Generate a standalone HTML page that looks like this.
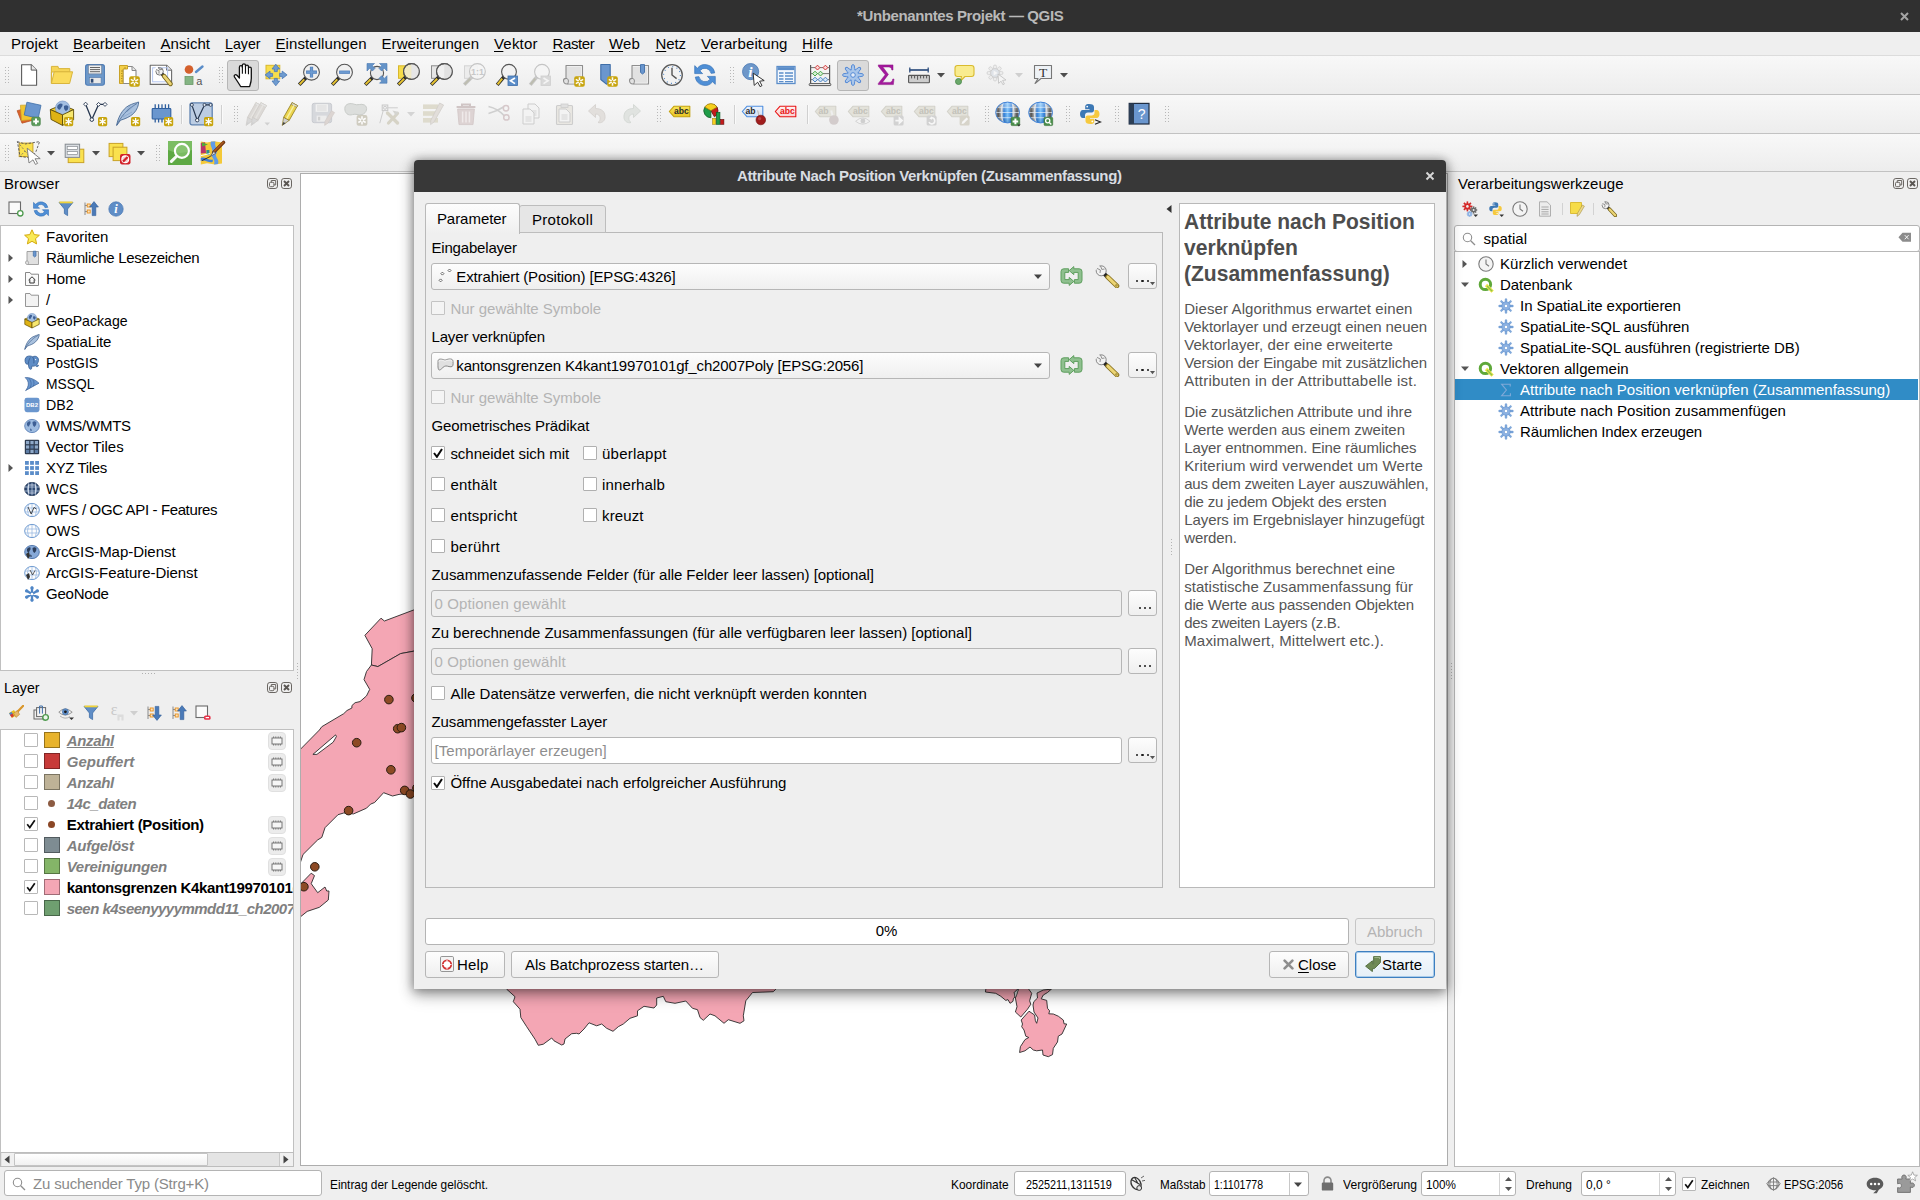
<!DOCTYPE html>
<html><head><meta charset="utf-8"><title>QGIS</title>
<style>
html,body{margin:0;padding:0;}
body{width:1920px;height:1200px;overflow:hidden;background:#efefef;font-family:"Liberation Sans", sans-serif;font-size:15px;position:relative;}
div,svg{box-sizing:border-box;}
.btn{position:absolute;border:1px solid #b6b6b6;border-radius:3px;background:linear-gradient(#fdfdfd,#efefef);}
.cb{position:absolute;width:14px;height:14px;border:1px solid #b8b8b8;border-radius:1px;background:#fff;}
.hd{position:absolute;width:5px;background-image:radial-gradient(circle,#b8b8b8 0.7px,transparent 0.9px);background-size:3px 3px;}
</style></head><body>
<div style="position:absolute;left:0px;top:0px;width:1920px;height:32px;background:#303030;"></div><div style="position:absolute;left:857px;top:5.80px;line-height:20px;height:20px;white-space:pre;font-size:15px;color:#b9b9b9;font-weight:700;letter-spacing:-0.386px;">*Unbenanntes Projekt — QGIS</div><svg style="position:absolute;left:1899.5px;top:11.5px;" width="9" height="9" viewBox="0 0 9 9"><path d="M1 1 L8 8 M8 1 L1 8" stroke="#a4a4a4" stroke-width="2" fill="none"/></svg><div style="position:absolute;left:0px;top:32px;width:1920px;height:24px;background:#efefef;border-bottom:1px solid #dcdcdc;"></div><div style="position:absolute;left:11px;top:33.80px;line-height:20px;white-space:pre;letter-spacing:0.048px;">Pro<span style="text-decoration:underline;text-underline-offset:2px">j</span>ekt</div><div style="position:absolute;left:73px;top:33.80px;line-height:20px;white-space:pre;letter-spacing:-0.007px;"><span style="text-decoration:underline;text-underline-offset:2px">B</span>earbeiten</div><div style="position:absolute;left:160.5px;top:33.80px;line-height:20px;white-space:pre;letter-spacing:0.046px;"><span style="text-decoration:underline;text-underline-offset:2px">A</span>nsicht</div><div style="position:absolute;left:225px;top:33.80px;line-height:20px;white-space:pre;transform-origin:0 0;transform:scaleX(0.9459);"><span style="text-decoration:underline;text-underline-offset:2px">L</span>ayer</div><div style="position:absolute;left:275.5px;top:33.80px;line-height:20px;white-space:pre;letter-spacing:0.074px;"><span style="text-decoration:underline;text-underline-offset:2px">E</span>instellungen</div><div style="position:absolute;left:381.5px;top:33.80px;line-height:20px;white-space:pre;letter-spacing:0.061px;">Er<span style="text-decoration:underline;text-underline-offset:2px">w</span>eiterungen</div><div style="position:absolute;left:494px;top:33.80px;line-height:20px;white-space:pre;letter-spacing:0.176px;"><span style="text-decoration:underline;text-underline-offset:2px">V</span>ektor</div><div style="position:absolute;left:552.5px;top:33.80px;line-height:20px;white-space:pre;letter-spacing:-0.398px;"><span style="text-decoration:underline;text-underline-offset:2px">R</span>aster</div><div style="position:absolute;left:609px;top:33.80px;line-height:20px;white-space:pre;letter-spacing:0.169px;"><span style="text-decoration:underline;text-underline-offset:2px">W</span>eb</div><div style="position:absolute;left:655.5px;top:33.80px;line-height:20px;white-space:pre;letter-spacing:-0.098px;"><span style="text-decoration:underline;text-underline-offset:2px">N</span>etz</div><div style="position:absolute;left:701px;top:33.80px;line-height:20px;white-space:pre;letter-spacing:0.124px;"><span style="text-decoration:underline;text-underline-offset:2px">V</span>erarbeitung</div><div style="position:absolute;left:802px;top:33.80px;line-height:20px;white-space:pre;letter-spacing:0.219px;"><span style="text-decoration:underline;text-underline-offset:2px">H</span>ilfe</div><div style="position:absolute;left:0px;top:56px;width:1920px;height:39px;background:linear-gradient(#f8f8f8,#ededed);border-bottom:1px solid #c2c2c2;"></div><div style="position:absolute;left:0px;top:95px;width:1920px;height:39px;background:linear-gradient(#f8f8f8,#ededed);border-bottom:1px solid #c2c2c2;"></div><div style="position:absolute;left:0px;top:134px;width:1920px;height:38px;background:linear-gradient(#f8f8f8,#ededed);border-bottom:1px solid #c2c2c2;"></div><div class="hd" style="left:4px;top:66px;height:17px"></div><svg style="position:absolute;left:16.0px;top:63.0px;overflow:visible;" width="24" height="24" viewBox="0 0 24 24"><path d="M5.6 1.7H15.200000000000001L20.6 7.1000000000000005V22.3H5.6Z" fill="#fff" stroke="#5a5a5a" stroke-width="1.1" stroke-linejoin="round"/><path d="M15.200000000000001 1.7V7.1000000000000005H20.6" fill="#e8e8e8" stroke="#5a5a5a" stroke-width="1" stroke-linejoin="round"/></svg><svg style="position:absolute;left:49.0px;top:63.0px;overflow:visible;" width="24" height="24" viewBox="0 0 24 24"><path d="M2.4 20.3V3.4H9L9.6 5.6H20.8V9H2.4Z" fill="#f6d557" stroke="#d9b53c" stroke-width="1" stroke-linejoin="round"/><path d="M2.4 20.5L5.2 8.8H23.6L20.6 20.5Z" fill="#fadb5c" stroke="#d9b53c" stroke-width="1" stroke-linejoin="round"/></svg><svg style="position:absolute;left:83.0px;top:63.0px;overflow:visible;" width="24" height="24" viewBox="0 0 24 24"><rect x="2.6" y="1.6" width="18.8" height="20.6" rx="2.2" fill="#6e99ca" stroke="#4f7db6" stroke-width="1.1"/><rect x="5.3" y="2.1" width="13.4" height="8.8" fill="#efefef" stroke="#6c7f99" stroke-width="0.7"/><path d="M7 4.5H17M7 6.6H17M7 8.7H17" stroke="#555" stroke-width="0.9"/><rect x="6.3" y="14.6" width="11.8" height="6" fill="#e9e9e9" stroke="#5578a8" stroke-width="0.6"/><rect x="7.8" y="15.8" width="2.6" height="3.8" fill="#2f4a73"/></svg><svg style="position:absolute;left:116.0px;top:63.0px;overflow:visible;" width="24" height="24" viewBox="0 0 24 24"><path d="M7 3.5H16L20 7.5V20.5H7Z" fill="#fff" stroke="#8a8a8a" stroke-width="1.1" stroke-linejoin="round"/><path d="M16 3.5V7.5H20" fill="#e8e8e8" stroke="#8a8a8a" stroke-width="1" stroke-linejoin="round"/><path d="M3.5 2.5H11.5V6H7V20.5H3.5Z" fill="#f3cf4a" stroke="#c9a227" stroke-width="1"/><path d="M5 8H7M5 10.5H6.3M5 13H7M5 15.5H6.3M5 18H7M9 4V6" stroke="#a8861c" stroke-width="0.8"/><rect x="13.2" y="13.2" width="10.6" height="10.6" rx="2" fill="#c8a50f"/><g stroke="#fff" stroke-width="1.6" stroke-linecap="butt" opacity="0.95"><path d="M18.5 14.3V22.7M14.8 16.4L22.2 20.6M14.8 20.6L22.2 16.4"/></g><path d="M18.5 17.0L19.8 18.5L18.5 20.0L17.2 18.5Z" fill="#c8a50f"/></svg><svg style="position:absolute;left:149.0px;top:63.0px;overflow:visible;" width="24" height="24" viewBox="0 0 24 24"><path d="M1.2 2.2H17.599999999999998L22.599999999999998 7.2V21.4H1.2Z" fill="#fff" stroke="#6a6a6a" stroke-width="1.1" stroke-linejoin="round"/><path d="M17.599999999999998 2.2V7.2H22.599999999999998" fill="#e8e8e8" stroke="#6a6a6a" stroke-width="1" stroke-linejoin="round"/><rect x="3.6" y="4.8" width="15" height="14" fill="none" stroke="#b5c7f0" stroke-width="1"/><circle cx="10.6" cy="8.4" r="3.7" fill="#f2f2f2" stroke="#6a6a6a" stroke-width="0.9"/><path d="M10.6 8.4L5 7L8 2.6Z" fill="#fff"/><path d="M7 6.6L10 7.6L10 10.6M9.4 4.2L10.8 6.8L13.4 6.2" fill="none" stroke="#6a6a6a" stroke-width="0.8"/><path d="M13 11L15.4 13.4" stroke="#333" stroke-width="3.4"/><path d="M15 13L21.6 21" stroke="#7a6820" stroke-width="4.4" stroke-linecap="round"/><path d="M15.2 13.2L21.4 20.8" stroke="#ecd574" stroke-width="2.8" stroke-linecap="round"/></svg><svg style="position:absolute;left:182.0px;top:63.0px;overflow:visible;" width="24" height="24" viewBox="0 0 24 24"><circle cx="7" cy="6.5" r="4.3" fill="#d4602c"/><path d="M14 9L20.5 3.5" stroke="#5b8dc9" stroke-width="2.4" stroke-linecap="round"/><rect x="3" y="13.5" width="8" height="8" fill="#84b483" stroke="#6a9a69" stroke-width="0.8"/><text x="17.3" y="21.5" font-family="Liberation Sans" font-size="11" text-anchor="middle" fill="#555">a</text></svg><div class="hd" style="left:218px;top:66px;height:17px"></div><div style="position:absolute;left:227px;top:60px;width:32px;height:31px;background:#dadada;border:1px solid #b6b6b6;border-radius:3px;"></div><svg style="position:absolute;left:231.0px;top:63.0px;overflow:visible;" width="24" height="24" viewBox="0 0 24 24"><g transform="translate(12 12) scale(1.24 1.19) translate(-10.5 -11.8)"><path d="M8.6 21.5C7.2 19 5 15.6 3.6 13.4C2.8 12 4.4 10.8 5.6 12L7.6 14.3V5.2C7.6 3.6 10 3.6 10 5.2V3.6C10 2 12.5 2 12.5 3.6V4.6C12.5 3.2 14.9 3.2 14.9 4.8V6.2C14.9 4.9 17.2 4.9 17.2 6.5V14.5C17.2 17.5 16.4 19.5 15.8 21.5Z" fill="#fff" stroke="#111" stroke-width="1.05" stroke-linejoin="round"/><path d="M10 5V10.8M12.5 4.6V10.8M14.9 6.2V11.2" stroke="#111" stroke-width="0.9"/></g></svg><svg style="position:absolute;left:264.0px;top:63.0px;overflow:visible;" width="24" height="24" viewBox="0 0 24 24"><rect x="2" y="2.3" width="13.8" height="13.5" fill="#f8de4c" stroke="#d8b72c" stroke-width="1"/><g fill="#6e9bd0" stroke="#4a78b4" stroke-width="0.8" stroke-linejoin="round"><path d="M11.8 1.2L15.6 6H13.3V8.6H10.3V6H8Z"/><path d="M11.8 22.8L15.6 18H13.3V15.4H10.3V18H8Z"/><path d="M1.1 11.9L6 8.1V10.4H8.6V13.4H6V15.7Z"/><path d="M23.1 11.9L18.2 8.1V10.4H15.6V13.4H18.2V15.7Z"/></g></svg><svg style="position:absolute;left:297.0px;top:63.0px;overflow:visible;" width="24" height="24" viewBox="0 0 24 24"><path d="M9.2 14.5 L2.2 21.8" stroke="#2a2a2a" stroke-width="3.6" stroke-linecap="butt"/><path d="M7.3 16.4 L2.6 21.4" stroke="#e8c432" stroke-width="2" stroke-linecap="butt"/><circle cx="14.5" cy="9.2" r="7.9" fill="#efefef" fill-opacity="0.93" stroke="#555" stroke-width="1.1"/><path d="M14.5 3.8V14.6M9.1 9.2H19.9" stroke="#4a78b4" stroke-width="3.2"/><path d="M14.5 4.3V14.1M9.6 9.2H19.4" stroke="#6d9bd1" stroke-width="2.1"/></svg><svg style="position:absolute;left:330.0px;top:63.0px;overflow:visible;" width="24" height="24" viewBox="0 0 24 24"><path d="M9.2 14.5 L2.2 21.8" stroke="#2a2a2a" stroke-width="3.6" stroke-linecap="butt"/><path d="M7.3 16.4 L2.6 21.4" stroke="#e8c432" stroke-width="2" stroke-linecap="butt"/><circle cx="14.5" cy="9.2" r="7.9" fill="#efefef" fill-opacity="0.93" stroke="#555" stroke-width="1.1"/><path d="M9.1 9.2H19.9" stroke="#4a78b4" stroke-width="3.2"/><path d="M9.6 9.2H19.4" stroke="#6d9bd1" stroke-width="2.1"/></svg><svg style="position:absolute;left:363.0px;top:63.0px;overflow:visible;" width="24" height="24" viewBox="0 0 24 24"><path d="M9.6 14.4 L2.2 21.8" stroke="#2a2a2a" stroke-width="3.6" stroke-linecap="butt"/><path d="M7.7 16.3 L2.6 21.4" stroke="#e8c432" stroke-width="2" stroke-linecap="butt"/><circle cx="14" cy="10" r="6.6" fill="#e9e9e9" fill-opacity="0.93" stroke="#555" stroke-width="1.1"/><g fill="#6493c8" stroke="#4a78b4" stroke-width="0.6"><path d="M4 0.5H11.5L9.3 2.7L12 5.4L9.4 8L6.7 5.3L4 8Z"/><path d="M24 0.5V8L21.3 5.3L18.6 8L16 5.4L18.7 2.7L16.5 0.5Z"/><path d="M24 20.2V12.7L21.3 15.4L18.6 12.7L16 15.3L18.7 18L16.5 20.2Z"/></g></svg><svg style="position:absolute;left:396.0px;top:63.0px;overflow:visible;" width="24" height="24" viewBox="0 0 24 24"><rect x="2.5" y="2.8" width="13" height="12.5" fill="#f6dc4a" stroke="#d8b72c" stroke-width="1"/><path d="M10.1 13.8 L2.2 21.8" stroke="#2a2a2a" stroke-width="3.6" stroke-linecap="butt"/><path d="M8.2 15.7 L2.6 21.4" stroke="#e8c432" stroke-width="2" stroke-linecap="butt"/><circle cx="15.4" cy="8.5" r="7.9" fill="#efe9cf" fill-opacity="0.93" stroke="#555" stroke-width="1.1"/><path d="M15.4 1V16.4A7.9 7.9 0 0 0 15.4 0.6Z" fill="#e6e6e6"/><circle cx="15.4" cy="8.5" r="7.9" fill="none" stroke="#555" stroke-width="1.1"/></svg><svg style="position:absolute;left:429.0px;top:63.0px;overflow:visible;" width="24" height="24" viewBox="0 0 24 24"><rect x="2.5" y="2.8" width="13" height="12.5" fill="#e6e6e6" stroke="#8c8c8c" stroke-width="1"/><path d="M10.1 13.8 L2.2 21.8" stroke="#2a2a2a" stroke-width="3.6" stroke-linecap="butt"/><path d="M8.2 15.7 L2.6 21.4" stroke="#e8c432" stroke-width="2" stroke-linecap="butt"/><circle cx="15.4" cy="8.5" r="7.9" fill="#f0f0f0" fill-opacity="0.93" stroke="#555" stroke-width="1.1"/><path d="M15.4 1V16.4A7.9 7.9 0 0 0 15.4 0.6Z" fill="#e2e2e2"/><circle cx="15.4" cy="8.5" r="7.9" fill="none" stroke="#555" stroke-width="1.1"/></svg><svg style="position:absolute;left:462.0px;top:63.0px;overflow:visible;" width="24" height="24" viewBox="0 0 24 24"><rect x="2.5" y="2.8" width="13" height="12.5" fill="#ececec" stroke="#d4d4d4" stroke-width="1"/><path d="M10.1 13.8 L2.2 21.8" stroke="#c8c8c8" stroke-width="3.6" stroke-linecap="butt"/><path d="M8.2 15.7 L2.6 21.4" stroke="#bdbdb0" stroke-width="2" stroke-linecap="butt"/><circle cx="15.4" cy="8.5" r="7.9" fill="#f4f4f4" fill-opacity="0.93" stroke="#c4c4c4" stroke-width="1.1"/><text x="15.4" y="11.6" font-family="Liberation Sans" font-size="9" font-weight="700" text-anchor="middle" fill="#c8c8c8">1:1</text></svg><svg style="position:absolute;left:495.0px;top:63.0px;overflow:visible;" width="24" height="24" viewBox="0 0 24 24"><path d="M9.1 13.7 L2.2 21.8" stroke="#2a2a2a" stroke-width="3.6" stroke-linecap="butt"/><path d="M7.2 15.6 L2.6 21.4" stroke="#e8c432" stroke-width="2" stroke-linecap="butt"/><circle cx="14" cy="8.8" r="7.4" fill="#f1f1f1" fill-opacity="0.93" stroke="#555" stroke-width="1.1"/><rect x="13" y="13" width="9.5" height="9.5" fill="#5b8dc9" stroke="#3f6ea8" stroke-width="0.8"/><path d="M20 15L15.5 17.8L20 20.6" fill="none" stroke="#fff" stroke-width="1.7"/></svg><svg style="position:absolute;left:528.0px;top:63.0px;overflow:visible;" width="24" height="24" viewBox="0 0 24 24"><path d="M9.1 13.7 L2.2 21.8" stroke="#c8c8c8" stroke-width="3.6" stroke-linecap="butt"/><path d="M7.2 15.6 L2.6 21.4" stroke="#bdbdb0" stroke-width="2" stroke-linecap="butt"/><circle cx="14" cy="8.8" r="7.4" fill="#f4f4f4" fill-opacity="0.93" stroke="#c4c4c4" stroke-width="1.1"/><rect x="13" y="13" width="9.5" height="9.5" fill="#d9d9d9" stroke="#cfcfcf" stroke-width="0.8"/><path d="M15.5 15L20 17.8L15.5 20.6" fill="none" stroke="#f4f4f4" stroke-width="1.7"/></svg><svg style="position:absolute;left:561.0px;top:63.0px;overflow:visible;" width="24" height="24" viewBox="0 0 24 24"><path d="M5 2.5H21.5V21H6C3.5 21 2.5 19.5 2.5 17.5C2.5 16 3.5 15.4 5 15.4Z" fill="#e2e2e2" stroke="#8e8e8e" stroke-width="1.1" stroke-linejoin="round"/><path d="M5 15.4C6.6 15.4 7.4 16.4 7.4 18C7.4 19.8 6.6 21 6 21" fill="none" stroke="#8e8e8e" stroke-width="1"/><path d="M6 3.5H20.5V20H8" fill="none" stroke="#f2f2f2" stroke-width="0.8"/><rect x="13.2" y="13.2" width="10.6" height="10.6" rx="2" fill="#c8a50f"/><g stroke="#fff" stroke-width="1.6" stroke-linecap="butt" opacity="0.95"><path d="M18.5 14.3V22.7M14.8 16.4L22.2 20.6M14.8 20.6L22.2 16.4"/></g><path d="M18.5 17.0L19.8 18.5L18.5 20.0L17.2 18.5Z" fill="#c8a50f"/></svg><svg style="position:absolute;left:594.0px;top:63.0px;overflow:visible;" width="24" height="24" viewBox="0 0 24 24"><path d="M6.8 1.5H16.2V18.5L12.4 21.2L6.8 16.5Z" fill="#6a96ce" stroke="#3f6ea8" stroke-width="1.1" stroke-linejoin="round"/><rect x="13.2" y="13.2" width="10.6" height="10.6" rx="2" fill="#c8a50f"/><g stroke="#fff" stroke-width="1.6" stroke-linecap="butt" opacity="0.95"><path d="M18.5 14.3V22.7M14.8 16.4L22.2 20.6M14.8 20.6L22.2 16.4"/></g><path d="M18.5 17.0L19.8 18.5L18.5 20.0L17.2 18.5Z" fill="#c8a50f"/></svg><svg style="position:absolute;left:627.0px;top:63.0px;overflow:visible;" width="24" height="24" viewBox="0 0 24 24"><path d="M5 2.5H21.5V21H6C3.5 21 2.5 19.5 2.5 17.5C2.5 16 3.5 15.4 5 15.4Z" fill="#e2e2e2" stroke="#8e8e8e" stroke-width="1.1" stroke-linejoin="round"/><path d="M5 15.4C6.6 15.4 7.4 16.4 7.4 18C7.4 19.8 6.6 21 6 21" fill="none" stroke="#8e8e8e" stroke-width="1"/><path d="M6 3.5H20.5V20H8" fill="none" stroke="#f2f2f2" stroke-width="0.8"/><path d="M13.5 1.6H17.5V9.4L15.5 11L13.5 9.4Z" fill="#6a96ce" stroke="#3f6ea8" stroke-width="0.9"/></svg><svg style="position:absolute;left:660.0px;top:63.0px;overflow:visible;" width="24" height="24" viewBox="0 0 24 24"><circle cx="12" cy="12" r="10.3" fill="#f2f2f2" stroke="#5a5a5a" stroke-width="1.3"/><circle cx="12" cy="12" r="8.4" fill="none" stroke="#4f86c6" stroke-width="1.1" stroke-dasharray="1 3.4"/><path d="M12 4.8V12L16.6 15.6" fill="none" stroke="#555" stroke-width="1.4"/></svg><svg style="position:absolute;left:693.0px;top:63.0px;overflow:visible;" width="24" height="24" viewBox="0 0 24 24"><g transform="translate(12 12) scale(1.17) translate(-12 -12)"><path d="M20.3 10.2A8.4 8.4 0 0 0 5.5 6.2L3.2 4V10.8H10L7.6 8.4A5.4 5.4 0 0 1 17.2 10.6Z" fill="#4f8fd6" stroke="#3772b8" stroke-width="0.6"/><path d="M3.7 13.8A8.4 8.4 0 0 0 18.5 17.8L20.8 20V13.2H14L16.4 15.6A5.4 5.4 0 0 1 6.8 13.4Z" fill="#4f8fd6" stroke="#3772b8" stroke-width="0.6"/></g></svg><div class="hd" style="left:729px;top:66px;height:17px"></div><div style="position:absolute;left:837px;top:60px;width:32px;height:31px;background:#dadada;border:1px solid #b6b6b6;border-radius:3px;"></div><svg style="position:absolute;left:741.0px;top:63.0px;overflow:visible;" width="24" height="24" viewBox="0 0 24 24"><circle cx="9.6" cy="8.6" r="8.1" fill="#6d97c9" stroke="#4a78b4" stroke-width="0.8"/><text x="9.4" y="14" font-family="Liberation Serif" font-style="italic" font-weight="700" font-size="15.5" text-anchor="middle" fill="#fff">i</text><path d="M12.2 10.2L23.2 17.6L18.6 18.2L21 22.6L19 23.6L16.7 19.2L13.2 22.4Z" fill="#fff" stroke="#222" stroke-width="0.9" stroke-linejoin="round"/></svg><svg style="position:absolute;left:774.0px;top:63.0px;overflow:visible;" width="24" height="24" viewBox="0 0 24 24"><rect x="3" y="3.5" width="18" height="17" fill="#f4f8fd" stroke="#5b8dc9" stroke-width="1.3"/><rect x="3.6" y="4.1" width="16.8" height="3" fill="#5b8dc9"/><path d="M5 10H9.5M11 10H19M5 13H9.5M11 13H19M5 16H9.5M11 16H19M5 18.7H9.5M11 18.7H19" stroke="#5b8dc9" stroke-width="1.3"/></svg><svg style="position:absolute;left:807.0px;top:63.0px;overflow:visible;" width="24" height="24" viewBox="0 0 24 24"><path d="M3.6 2V21M22.6 2V21" stroke="#555" stroke-width="1.2"/><rect x="2.2" y="20.6" width="21.6" height="2" rx="0.6" fill="#f0f0f0" stroke="#555" stroke-width="1"/><path d="M3.6 4.6H22.6M3.6 10.6H22.6M3.6 16.6H22.6" stroke="#666" stroke-width="0.9"/><g stroke-width="1"><path d="M10.5 2.2L12.9 4.6L10.5 7L8.1 4.6Z" fill="#fbd5d5" stroke="#d23a3a"/><path d="M18.4 2.2L20.8 4.6L18.4 7L16 4.6Z" fill="#fbd5d5" stroke="#d23a3a"/><path d="M8 8.2L10.4 10.6L8 13L5.6 10.6Z" fill="#d3f0d3" stroke="#4aa84a"/><path d="M13.5 8.2L15.9 10.6L13.5 13L11.1 10.6Z" fill="#d3f0d3" stroke="#4aa84a"/><path d="M8 14.2L10.4 16.6L8 19L5.6 16.6Z" fill="#d3e6f8" stroke="#4f86c6"/><path d="M13.5 14.2L15.9 16.6L13.5 19L11.1 16.6Z" fill="#d3e6f8" stroke="#4f86c6"/><path d="M18.4 14.2L20.8 16.6L18.4 19L16 16.6Z" fill="#d3e6f8" stroke="#4f86c6"/></g></svg><svg style="position:absolute;left:841.0px;top:63.0px;overflow:visible;" width="24" height="24" viewBox="0 0 24 24"><path d="M10.1 7.0L10.7 2.3999999999999995Q12 0.5999999999999993 13.3 2.3999999999999995L13.9 7.0Z" transform="rotate(0.0 12 12)" fill="#a9c6ea" stroke="#4a82d4" stroke-width="0.9" stroke-linejoin="round"/><path d="M10.1 7.0L10.7 2.3999999999999995Q12 0.5999999999999993 13.3 2.3999999999999995L13.9 7.0Z" transform="rotate(45.0 12 12)" fill="#a9c6ea" stroke="#4a82d4" stroke-width="0.9" stroke-linejoin="round"/><path d="M10.1 7.0L10.7 2.3999999999999995Q12 0.5999999999999993 13.3 2.3999999999999995L13.9 7.0Z" transform="rotate(90.0 12 12)" fill="#a9c6ea" stroke="#4a82d4" stroke-width="0.9" stroke-linejoin="round"/><path d="M10.1 7.0L10.7 2.3999999999999995Q12 0.5999999999999993 13.3 2.3999999999999995L13.9 7.0Z" transform="rotate(135.0 12 12)" fill="#a9c6ea" stroke="#4a82d4" stroke-width="0.9" stroke-linejoin="round"/><path d="M10.1 7.0L10.7 2.3999999999999995Q12 0.5999999999999993 13.3 2.3999999999999995L13.9 7.0Z" transform="rotate(180.0 12 12)" fill="#a9c6ea" stroke="#4a82d4" stroke-width="0.9" stroke-linejoin="round"/><path d="M10.1 7.0L10.7 2.3999999999999995Q12 0.5999999999999993 13.3 2.3999999999999995L13.9 7.0Z" transform="rotate(225.0 12 12)" fill="#a9c6ea" stroke="#4a82d4" stroke-width="0.9" stroke-linejoin="round"/><path d="M10.1 7.0L10.7 2.3999999999999995Q12 0.5999999999999993 13.3 2.3999999999999995L13.9 7.0Z" transform="rotate(270.0 12 12)" fill="#a9c6ea" stroke="#4a82d4" stroke-width="0.9" stroke-linejoin="round"/><path d="M10.1 7.0L10.7 2.3999999999999995Q12 0.5999999999999993 13.3 2.3999999999999995L13.9 7.0Z" transform="rotate(315.0 12 12)" fill="#a9c6ea" stroke="#4a82d4" stroke-width="0.9" stroke-linejoin="round"/><circle cx="12" cy="12" r="5.6" fill="#a9c6ea" stroke="#4a82d4" stroke-width="0.9"/><path d="M10.55 7.4L10.9 4.800000000000001H13.1L13.45 7.4Z" transform="rotate(0.0 12 12)" fill="#a9c6ea"/><path d="M10.55 7.4L10.9 4.800000000000001H13.1L13.45 7.4Z" transform="rotate(45.0 12 12)" fill="#a9c6ea"/><path d="M10.55 7.4L10.9 4.800000000000001H13.1L13.45 7.4Z" transform="rotate(90.0 12 12)" fill="#a9c6ea"/><path d="M10.55 7.4L10.9 4.800000000000001H13.1L13.45 7.4Z" transform="rotate(135.0 12 12)" fill="#a9c6ea"/><path d="M10.55 7.4L10.9 4.800000000000001H13.1L13.45 7.4Z" transform="rotate(180.0 12 12)" fill="#a9c6ea"/><path d="M10.55 7.4L10.9 4.800000000000001H13.1L13.45 7.4Z" transform="rotate(225.0 12 12)" fill="#a9c6ea"/><path d="M10.55 7.4L10.9 4.800000000000001H13.1L13.45 7.4Z" transform="rotate(270.0 12 12)" fill="#a9c6ea"/><path d="M10.55 7.4L10.9 4.800000000000001H13.1L13.45 7.4Z" transform="rotate(315.0 12 12)" fill="#a9c6ea"/><circle cx="12" cy="12" r="2.3" fill="#e4ecf7" stroke="#4a82d4" stroke-width="0.9"/></svg><svg style="position:absolute;left:874.0px;top:63.0px;overflow:visible;" width="24" height="24" viewBox="0 0 24 24"><path d="M4.3 1.9H19V7H17.8C17.4 4.8 16.6 4 14.6 4H8.8L14.4 11.4L8.4 19.4H15.4C17.4 19.4 18.4 18.4 18.8 16H20L19.4 21.6H4.3V20.4L11.2 11.8L4.3 3.2Z" fill="#a3199c" stroke="#8a1284" stroke-width="0.5"/></svg><svg style="position:absolute;left:907.0px;top:63.0px;overflow:visible;" width="24" height="24" viewBox="0 0 24 24"><path d="M2.6 7H21.4" stroke="#2f4f7e" stroke-width="1.7"/><path d="M2.8 4.4V9.6M21.2 4.4V9.6" stroke="#2f4f7e" stroke-width="1.3"/><rect x="1.6" y="12.4" width="20.8" height="7.4" rx="0.8" fill="#cdcdcd" stroke="#555" stroke-width="1.1"/><path d="M4.6 12.6V15.4M7.6 12.6V15.4M10.6 12.6V16.8M13.6 12.6V15.4M16.6 12.6V15.4M19.6 12.6V15.4" stroke="#555" stroke-width="1"/></svg><svg style="position:absolute;left:936.5px;top:73px;" width="8" height="5" viewBox="0 0 8 5"><path d="M0 0H8L4 4.6Z" fill="#4d4d4d"/></svg><svg style="position:absolute;left:952.0px;top:63.0px;overflow:visible;" width="24" height="24" viewBox="0 0 24 24"><path d="M5.5 2.5H19.5Q22 2.5 22 5V11Q22 13.5 19.5 13.5H13L8.5 18L9.5 13.5H5.5Q3 13.5 3 11V5Q3 2.5 5.5 2.5Z" fill="#f9ec8f" stroke="#d9bb2e" stroke-width="1.1" stroke-linejoin="round"/><circle cx="6.5" cy="18.5" r="3" fill="#6aa86a" stroke="#4d8a4d" stroke-width="0.9"/></svg><svg style="position:absolute;left:985.0px;top:63.0px;overflow:visible;" width="24" height="24" viewBox="0 0 24 24"><rect x="8.4" y="2" width="3.2" height="5.5" rx="1.6" transform="rotate(0.0 10 10)" fill="#ececec" stroke="#cfcfcf" stroke-width="0.8"/><rect x="8.4" y="2" width="3.2" height="5.5" rx="1.6" transform="rotate(45.0 10 10)" fill="#ececec" stroke="#cfcfcf" stroke-width="0.8"/><rect x="8.4" y="2" width="3.2" height="5.5" rx="1.6" transform="rotate(90.0 10 10)" fill="#ececec" stroke="#cfcfcf" stroke-width="0.8"/><rect x="8.4" y="2" width="3.2" height="5.5" rx="1.6" transform="rotate(135.0 10 10)" fill="#ececec" stroke="#cfcfcf" stroke-width="0.8"/><rect x="8.4" y="2" width="3.2" height="5.5" rx="1.6" transform="rotate(180.0 10 10)" fill="#ececec" stroke="#cfcfcf" stroke-width="0.8"/><rect x="8.4" y="2" width="3.2" height="5.5" rx="1.6" transform="rotate(225.0 10 10)" fill="#ececec" stroke="#cfcfcf" stroke-width="0.8"/><rect x="8.4" y="2" width="3.2" height="5.5" rx="1.6" transform="rotate(270.0 10 10)" fill="#ececec" stroke="#cfcfcf" stroke-width="0.8"/><rect x="8.4" y="2" width="3.2" height="5.5" rx="1.6" transform="rotate(315.0 10 10)" fill="#ececec" stroke="#cfcfcf" stroke-width="0.8"/><circle cx="10" cy="10" r="5" fill="#ececec" stroke="#cfcfcf" stroke-width="0.8"/><rect x="8.9" y="3" width="2.2" height="5" transform="rotate(0.0 10 10)" fill="#ececec"/><rect x="8.9" y="3" width="2.2" height="5" transform="rotate(45.0 10 10)" fill="#ececec"/><rect x="8.9" y="3" width="2.2" height="5" transform="rotate(90.0 10 10)" fill="#ececec"/><rect x="8.9" y="3" width="2.2" height="5" transform="rotate(135.0 10 10)" fill="#ececec"/><rect x="8.9" y="3" width="2.2" height="5" transform="rotate(180.0 10 10)" fill="#ececec"/><rect x="8.9" y="3" width="2.2" height="5" transform="rotate(225.0 10 10)" fill="#ececec"/><rect x="8.9" y="3" width="2.2" height="5" transform="rotate(270.0 10 10)" fill="#ececec"/><rect x="8.9" y="3" width="2.2" height="5" transform="rotate(315.0 10 10)" fill="#ececec"/><circle cx="10" cy="10" r="0" fill="#eef3fa" stroke="#cfcfcf" stroke-width="0.9"/><circle cx="10" cy="10" r="4.4" fill="#dfe3e8" stroke="#cfcfcf"/><path d="M8.6 7.6L12.6 10L8.6 12.4Z" fill="#f6f6f6"/><path d="M13 11L21 17L17.6 17.4L19.4 21L17.9 21.7L16.1 18.2L13.6 20.4Z" fill="#f4f4f4" stroke="#c4c4c4" stroke-width="0.9"/></svg><svg style="position:absolute;left:1015px;top:73px;" width="8" height="5" viewBox="0 0 8 5"><path d="M0 0H8L4 4.6Z" fill="#cfcfcf"/></svg><svg style="position:absolute;left:1031.0px;top:63.0px;overflow:visible;" width="24" height="24" viewBox="0 0 24 24"><path d="M3.5 2.5H20.5V15.5H10L4 20.5L7 15.5H3.5Z" fill="#eef2f6" stroke="#777" stroke-width="1.1" stroke-linejoin="round"/><text x="12" y="13.5" font-family="Liberation Serif" font-size="13.5" text-anchor="middle" fill="#333">T</text></svg><svg style="position:absolute;left:1060px;top:73px;" width="8" height="5" viewBox="0 0 8 5"><path d="M0 0H8L4 4.6Z" fill="#4d4d4d"/></svg><div class="hd" style="left:4px;top:105px;height:17px"></div><svg style="position:absolute;left:16.0px;top:102.0px;overflow:visible;" width="24" height="24" viewBox="0 0 24 24"><path d="M1.1 8.7L13 5.5L16 18.5L6 21.2Z" fill="#d9622b" stroke="#b44e1e" stroke-width="0.7"/><path d="M4.4 3.2L16.5 3L17.5 17.4L5.5 18.5Z" fill="#f2c530" stroke="#c9a227" stroke-width="0.7"/><path d="M10.9 0.2L25 3.3L22.2 16.3L8.2 13Z" fill="#6a96ce" stroke="#3f6ea8" stroke-width="0.8"/><rect x="15.6" y="15" width="8.8" height="8.8" rx="1.8" fill="#5a9a5a" stroke="#447d44" stroke-width="0.5"/><path d="M20 16.6V22.2M17.2 19.4H22.8" stroke="#fff" stroke-width="2"/></svg><svg style="position:absolute;left:49.0px;top:102.0px;overflow:visible;" width="24" height="24" viewBox="0 0 24 24"><path d="M1.3 7.6L12.5 3L24.6 7.6L13.5 12.8Z" fill="#f1cf33" stroke="#5e4c08" stroke-width="0.9" stroke-linejoin="round"/><circle cx="13.6" cy="6.2" r="7.2" fill="#a3bfe2" stroke="#6d8fc0" stroke-width="0.6"/><path d="M8.5 3.5q2.5 -3 5 -1.5q0.5 2.5 -1.5 4q-1 3 -3 1q-1.5 -1.5 -0.5 -3.5zM15 4q2.5 -1.5 4.5 0.5q0 3.5 -2.5 4.5q-2.5 -1.5 -2 -5z" fill="#3d5f95"/><path d="M1.3 7.6L13.5 12.8V23.4L2 17.4Z" fill="#dfb214" stroke="#5e4c08" stroke-width="0.9" stroke-linejoin="round"/><path d="M13.5 12.8L24.6 7.6V17.8L13.5 23.4Z" fill="#f7e76f" stroke="#5e4c08" stroke-width="0.9" stroke-linejoin="round"/><rect x="15" y="15" width="9.2" height="9.2" rx="1.6" fill="#c8a50f"/><g stroke="#fff" stroke-width="1.25" stroke-linecap="butt"><path d="M19.6 16.0V23.200000000000003M16.5 17.8L22.700000000000003 21.400000000000002M16.5 21.400000000000002L22.700000000000003 17.8"/></g></svg><svg style="position:absolute;left:83.0px;top:102.0px;overflow:visible;" width="24" height="24" viewBox="0 0 24 24"><path d="M2.6 2.2L8.8 17.4L15.6 2.4H22.2" fill="none" stroke="#26364f" stroke-width="1.3" stroke-linejoin="round"/><path d="M2.6 0.2L4.6 2.2L2.6 4.2L0.6 2.2ZM15.6 0.4L17.6 2.4L15.6 4.4L13.6 2.4ZM22 0.4L24 2.4L22 4.4L20 2.4Z" fill="#fff" stroke="#26364f" stroke-width="0.9"/><circle cx="8.8" cy="17.6" r="1.8" fill="#fff" stroke="#26364f" stroke-width="1"/><rect x="15" y="15" width="9.2" height="9.2" rx="1.6" fill="#c8a50f"/><g stroke="#fff" stroke-width="1.25" stroke-linecap="butt"><path d="M19.6 16.0V23.200000000000003M16.5 17.8L22.700000000000003 21.400000000000002M16.5 21.400000000000002L22.700000000000003 17.8"/></g></svg><svg style="position:absolute;left:116.0px;top:102.0px;overflow:visible;" width="24" height="24" viewBox="0 0 24 24"><path d="M0.7 23.4C1.5 17 6 7 13 3.5C16.5 1.6 20 1 22.6 0C22.8 3 21 8 17.5 11.5C14 15 8.5 17 4.6 18.2Z" fill="#a9c1de" stroke="#4a6a94" stroke-width="0.9" stroke-linejoin="round"/><path d="M0.7 23.4C4 16 11 7 21 1.5" fill="none" stroke="#4a6a94" stroke-width="0.8"/><path d="M8 12L14 4M11 10L18 3.5M7 15L16 10" stroke="#7d9cc4" stroke-width="0.6"/><rect x="15" y="15" width="9.2" height="9.2" rx="1.6" fill="#c8a50f"/><g stroke="#fff" stroke-width="1.25" stroke-linecap="butt"><path d="M19.6 16.0V23.200000000000003M16.5 17.8L22.700000000000003 21.400000000000002M16.5 21.400000000000002L22.700000000000003 17.8"/></g></svg><svg style="position:absolute;left:149.0px;top:102.0px;overflow:visible;" width="24" height="24" viewBox="0 0 24 24"><path d="M6.2 6.5V2.2M9.6 6.5V2.2M13 6.5V2.2M16.4 6.5V2.2M19.6 6.5V2.2M6.2 17V20.4M9.6 17V20.4M13 17V20.4M16.4 17V20.4M19.6 17V20.4" stroke="#2f5f9e" stroke-width="1.3"/><rect x="3.2" y="6.5" width="18.6" height="10.5" rx="0.8" fill="#6a96ce" stroke="#2f5f9e" stroke-width="1.1"/><rect x="15" y="15" width="9.2" height="9.2" rx="1.6" fill="#c8a50f"/><g stroke="#fff" stroke-width="1.25" stroke-linecap="butt"><path d="M19.6 16.0V23.200000000000003M16.5 17.8L22.700000000000003 21.400000000000002M16.5 21.400000000000002L22.700000000000003 17.8"/></g></svg><div style="position:absolute;left:181px;top:105px;width:1px;height:19px;background:#d0d0d0;"></div><div style="position:absolute;left:182px;top:105px;width:1px;height:19px;background:#fafafa;"></div><svg style="position:absolute;left:189.0px;top:102.0px;overflow:visible;" width="24" height="24" viewBox="0 0 24 24"><rect x="1" y="0.8" width="22.2" height="22" rx="2" fill="#bccde3" stroke="#5f82b0" stroke-width="1.3"/><path d="M2.8 2.9L8.2 18.2L15.5 2.9H22" fill="none" stroke="#26364f" stroke-width="1.2" stroke-linejoin="round"/><circle cx="2.9" cy="2.9" r="1.5" fill="#e4ebf4" stroke="#26364f" stroke-width="0.8"/><circle cx="15.5" cy="2.9" r="1.5" fill="#e4ebf4" stroke="#26364f" stroke-width="0.8"/><circle cx="21.6" cy="2.9" r="1.5" fill="#e4ebf4" stroke="#26364f" stroke-width="0.8"/><circle cx="8.2" cy="18.2" r="1.7" fill="#fff" stroke="#26364f" stroke-width="0.9"/><rect x="15" y="15" width="9.2" height="9.2" rx="1.6" fill="#c8a50f"/><g stroke="#fff" stroke-width="1.25" stroke-linecap="butt"><path d="M19.6 16.0V23.200000000000003M16.5 17.8L22.700000000000003 21.400000000000002M16.5 21.400000000000002L22.700000000000003 17.8"/></g></svg><div style="position:absolute;left:221px;top:105px;width:1px;height:19px;background:#d0d0d0;"></div><div style="position:absolute;left:222px;top:105px;width:1px;height:19px;background:#fafafa;"></div><div class="hd" style="left:233px;top:105px;height:17px"></div><svg style="position:absolute;left:245.0px;top:102.0px;overflow:visible;" width="24" height="24" viewBox="0 0 24 24"><g transform="translate(-1.5 0)"><path d="M12.4 0.6L18 3.6L9.6 18.4L4 15.4Z" fill="#dcd9d6" stroke="#cfccc8" stroke-width="0.8" stroke-linejoin="round"/><path d="M12.4 0.6L18 3.6L17 5.4L11.4 2.4Z" fill="#e6e6e6" stroke="#cfccc8" stroke-width="0.6"/><path d="M14.6 3.2L7 16.6" stroke="#e6e4e1" stroke-width="1.5"/><path d="M4 15.4L9.6 18.4L2.6 23.4Z" fill="#d8d8d8" stroke="#cfccc8" stroke-width="0.7" stroke-linejoin="round"/><path d="M2.6 23.4L3.8 20L6 21.2Z" fill="#d0d0d0"/></g><g transform="translate(3.5 0)"><path d="M12.4 0.6L18 3.6L9.6 18.4L4 15.4Z" fill="#dcd9d6" stroke="#cfccc8" stroke-width="0.8" stroke-linejoin="round"/><path d="M12.4 0.6L18 3.6L17 5.4L11.4 2.4Z" fill="#e6e6e6" stroke="#cfccc8" stroke-width="0.6"/><path d="M14.6 3.2L7 16.6" stroke="#e6e4e1" stroke-width="1.5"/><path d="M4 15.4L9.6 18.4L2.6 23.4Z" fill="#d8d8d8" stroke="#cfccc8" stroke-width="0.7" stroke-linejoin="round"/><path d="M2.6 23.4L3.8 20L6 21.2Z" fill="#d0d0d0"/></g><path d="M19.5 20.6H25L22.3 23.4Z" fill="#d0d0d0"/></svg><svg style="position:absolute;left:277.0px;top:102.0px;overflow:visible;" width="24" height="24" viewBox="0 0 24 24"><g transform="translate(2.6 0)"><path d="M12.4 0.6L18 3.6L9.6 18.4L4 15.4Z" fill="#ecd44e" stroke="#8e7a1a" stroke-width="0.8" stroke-linejoin="round"/><path d="M12.4 0.6L18 3.6L17 5.4L11.4 2.4Z" fill="#d4d4d4" stroke="#8e7a1a" stroke-width="0.6"/><path d="M14.6 3.2L7 16.6" stroke="#f7f0a0" stroke-width="1.5"/><path d="M4 15.4L9.6 18.4L2.6 23.4Z" fill="#cfcfcf" stroke="#8e7a1a" stroke-width="0.7" stroke-linejoin="round"/><path d="M2.6 23.4L3.8 20L6 21.2Z" fill="#444"/></g></svg><svg style="position:absolute;left:310.0px;top:102.0px;overflow:visible;" width="24" height="24" viewBox="0 0 24 24"><rect x="2.2" y="1.3" width="19.4" height="19.4" rx="2" fill="#d6d8dc" stroke="#c9cbd0" stroke-width="1"/><rect x="5.6" y="2.2" width="12.4" height="7.6" fill="#f1f1f1"/><path d="M7 4H16.6M7 6H16.6M7 8H16.6" stroke="#d4d4d4" stroke-width="0.8"/><rect x="6.6" y="13.6" width="10" height="6" fill="#ececec"/><rect x="8" y="14.8" width="2.2" height="3.6" fill="#d0d0d0"/><path d="M21.5 8.8L24.6 10.6L18.2 21L14.6 23.4L15 19.2Z" fill="#dcd5d2" stroke="#d0c9c6" stroke-width="0.6"/></svg><svg style="position:absolute;left:343.0px;top:102.0px;overflow:visible;" width="24" height="24" viewBox="0 0 24 24"><path d="M1.8 6.5C1.8 1.5 8 0.8 11 2.2C14.5 3.8 18 1.2 21.5 3C25 5 24 11 19 12.6C15 13.6 13 11.4 9.5 12.6C5 14 1.8 11 1.8 6.5Z" fill="#dcdedc" stroke="#c9ccc9" stroke-width="1"/><rect x="13.6" y="13" width="10.8" height="10.8" rx="2" fill="#cfccc0"/><g stroke="#fff" stroke-width="1.6" stroke-linecap="butt" opacity="0.95"><path d="M19.0 14.2V22.599999999999998M15.3 16.299999999999997L22.7 20.5M15.3 20.5L22.7 16.299999999999997"/></g><path d="M19.0 16.9L20.3 18.4L19.0 19.9L17.7 18.4Z" fill="#cfccc0"/></svg><svg style="position:absolute;left:376.0px;top:102.0px;overflow:visible;" width="24" height="24" viewBox="0 0 24 24"><rect x="6.2" y="3" width="5.6" height="5.6" fill="#f0f0f0" stroke="#c8c8c8" stroke-width="1"/><circle cx="9" cy="5.8" r="1.5" fill="none" stroke="#c8c8c8" stroke-width="0.9"/><path d="M11.8 5.8H21.8M7.2 8.6L3.8 21.2" stroke="#cdcdcd" stroke-width="1"/><path d="M11.5 11L21.5 21" stroke="#d6d3c6" stroke-width="3.4" stroke-linecap="round"/><path d="M21.5 11.5L12.5 21" stroke="#d6d3c6" stroke-width="3.2" stroke-linecap="round"/><path d="M16.5 8.6L23 10L20 14Z" fill="#d4d4d0"/></svg><svg style="position:absolute;left:406.5px;top:112px;" width="8" height="5" viewBox="0 0 8 5"><path d="M0 0H8L4 4.6Z" fill="#d4d4d4"/></svg><svg style="position:absolute;left:421.0px;top:102.0px;overflow:visible;" width="24" height="24" viewBox="0 0 24 24"><rect x="2" y="2.4" width="15" height="4.6" fill="#dedbcd"/><rect x="2" y="9.2" width="15" height="4.6" fill="#dedbcd"/><rect x="2" y="16" width="15" height="4.6" fill="#dedbcd"/><path d="M18.6 1L22.6 3L13 20L9.6 22.6L9.8 18.4Z" fill="#e2deda" stroke="#cfcbc7" stroke-width="0.7"/></svg><svg style="position:absolute;left:454.0px;top:102.0px;overflow:visible;" width="24" height="24" viewBox="0 0 24 24"><path d="M3.6 7H20.4L19 22.6H5Z" fill="#ddd3d3" stroke="#d0c5c5" stroke-width="0.8"/><path d="M2.6 5H21.4M8 5V2.6H16V5" fill="none" stroke="#d0c5c5" stroke-width="2"/><path d="M8.6 9.6V20.4M12 9.6V20.4M15.4 9.6V20.4" stroke="#efeaea" stroke-width="1.5"/></svg><svg style="position:absolute;left:487.0px;top:102.0px;overflow:visible;" width="24" height="24" viewBox="0 0 24 24"><path d="M1.5 4.5C8 6 13 9 17.5 14M1.5 11.5C7 10 12 8 16.5 5" stroke="#cfcfcf" stroke-width="1.7" fill="none"/><circle cx="19" cy="6.2" r="2.7" fill="none" stroke="#d6c8ca" stroke-width="1.5"/><circle cx="19.4" cy="15.4" r="2.7" fill="none" stroke="#d6c8ca" stroke-width="1.5"/></svg><svg style="position:absolute;left:520.0px;top:102.0px;overflow:visible;" width="24" height="24" viewBox="0 0 24 24"><path d="M8 2H15L19 6V16H8Z" fill="#f3f3f3" stroke="#cdcdcd" stroke-width="1"/><path d="M10.5 9H16.5M10.5 11H16.5M10.5 13H16.5" stroke="#cdcdcd" stroke-width="0.8"/><path d="M3 7H10L14 11V22H3Z" fill="#f3f3f3" stroke="#cdcdcd" stroke-width="1"/><path d="M5.5 15H11.5M5.5 17H11.5M5.5 19H11.5" stroke="#cdcdcd" stroke-width="0.8"/></svg><svg style="position:absolute;left:553.0px;top:102.0px;overflow:visible;" width="24" height="24" viewBox="0 0 24 24"><rect x="3.5" y="3.5" width="16" height="19" rx="1" fill="#e9e7e2" stroke="#cdcdcd" stroke-width="1.1"/><rect x="8" y="2" width="7" height="3.5" fill="#e0e0e0" stroke="#cdcdcd" stroke-width="0.8"/><path d="M6 7H13L17 11V20H6Z" fill="#f3f3f3" stroke="#cdcdcd" stroke-width="1"/><path d="M8.5 13H14.5M8.5 15H14.5M8.5 17H14.5" stroke="#cdcdcd" stroke-width="0.8"/></svg><svg style="position:absolute;left:586.0px;top:102.0px;overflow:visible;" width="24" height="24" viewBox="0 0 24 24"><path d="M2.5 9L9.5 2.5V6.5C16 6.5 19.5 10 19 16C18.5 19.5 15 21.5 12 20.5C15 19 15.5 12 9.5 12V15.5Z" fill="#e2dfdc" stroke="#d6d3cf" stroke-width="0.9" stroke-linejoin="round"/></svg><svg style="position:absolute;left:619.0px;top:102.0px;overflow:visible;" width="24" height="24" viewBox="0 0 24 24"><path d="M21.5 9L14.5 2.5V6.5C8 6.5 4.5 10 5 16C5.5 19.5 9 21.5 12 20.5C9 19 8.5 12 14.5 12V15.5Z" fill="#e0e3e0" stroke="#d3d7d3" stroke-width="0.9" stroke-linejoin="round"/></svg><div class="hd" style="left:656px;top:105px;height:17px"></div><svg style="position:absolute;left:668.0px;top:102.0px;overflow:visible;" width="24" height="24" viewBox="0 0 24 24"><defs><linearGradient id="g57373" x1="0" y1="0" x2="0" y2="1"><stop offset="0" stop-color="#f9e458"/><stop offset="1" stop-color="#e9c524"/></linearGradient></defs><path d="M5.8999999999999995 4.3H21.8V14.7H5.8999999999999995L1.3 9.5Z" fill="url(#g57373)" stroke="#c4a20e" stroke-width="1.1" stroke-linejoin="round"/><text x="13.45" y="12.0" font-family="Liberation Sans" font-weight="700" font-size="8.6" text-anchor="middle" fill="#2a2a2a">abc</text></svg><svg style="position:absolute;left:701.0px;top:102.0px;overflow:visible;" width="24" height="24" viewBox="0 0 24 24"><g stroke-width="0.7"><path d="M9.9 8.7L9.9 1.6A7.1 7.1 0 0 1 16.05 12.25Z" fill="#c41a1a" stroke="#5a1010" transform="rotate(30 9.9 8.7)"/><path d="M9.9 8.7L16.05 12.25A7.1 7.1 0 0 1 3.75 12.25Z" fill="#1f9c48" stroke="#145a26" transform="rotate(60 9.9 8.7)"/><path d="M9.9 8.7L3.75 5.15A7.1 7.1 0 0 1 16.05 5.15Z" fill="#f6cf1c" stroke="#8a6d10"/></g><rect x="11.5" y="16.3" width="3.3" height="6" fill="#f6cf1c" stroke="#a8861c" stroke-width="0.6"/><rect x="15.3" y="10.3" width="3.6" height="12" fill="#1f9c48" stroke="#0f5a26" stroke-width="0.7"/><rect x="19.5" y="17.4" width="3.4" height="4.9" fill="#c41a1a" stroke="#5a1010" stroke-width="0.6"/></svg><div style="position:absolute;left:734px;top:105px;width:1px;height:19px;background:#d0d0d0;"></div><div style="position:absolute;left:735px;top:105px;width:1px;height:19px;background:#fafafa;"></div><svg style="position:absolute;left:741.0px;top:102.0px;overflow:visible;" width="24" height="24" viewBox="0 0 24 24"><defs><linearGradient id="g46999" x1="0" y1="0" x2="0" y2="1"><stop offset="0" stop-color="#eef4fd"/><stop offset="1" stop-color="#cfe0f8"/></linearGradient></defs><path d="M5.8999999999999995 4.3H21.8V14.7H5.8999999999999995L1.3 9.5Z" fill="url(#g46999)" stroke="#4f8fe0" stroke-width="1.1" stroke-linejoin="round"/><text x="9.4" y="12.0" font-family="Liberation Sans" font-weight="700" font-size="8.6" text-anchor="middle" fill="#2a2a2a">ab</text><path d="M17.2 8.4L18.6 14" stroke="#e4e4e4" stroke-width="2"/><path d="M16.6 8.4L18 14" stroke="#999" stroke-width="0.6"/><circle cx="19.8" cy="18" r="4.8" fill="#a01c1c" stroke="#6e1010" stroke-width="0.6"/><circle cx="18.6" cy="16.6" r="1.6" fill="#c65a5a" opacity="0.7"/></svg><svg style="position:absolute;left:774.0px;top:102.0px;overflow:visible;" width="24" height="24" viewBox="0 0 24 24"><defs><linearGradient id="g96308" x1="0" y1="0" x2="0" y2="1"><stop offset="0" stop-color="#fff3f3"/><stop offset="1" stop-color="#f9cfcf"/></linearGradient></defs><path d="M5.8999999999999995 4.3H21.8V14.7H5.8999999999999995L1.3 9.5Z" fill="url(#g96308)" stroke="#e81414" stroke-width="1.1" stroke-linejoin="round"/><text x="13.45" y="12.0" font-family="Liberation Sans" font-weight="700" font-size="8.6" text-anchor="middle" fill="#e81414">abc</text></svg><div style="position:absolute;left:807px;top:105px;width:1px;height:19px;background:#d0d0d0;"></div><div style="position:absolute;left:808px;top:105px;width:1px;height:19px;background:#fafafa;"></div><svg style="position:absolute;left:814.0px;top:102.0px;overflow:visible;" width="24" height="24" viewBox="0 0 24 24"><path d="M5.8999999999999995 4.3H21.8V14.7H5.8999999999999995L1.3 9.5Z" fill="#e3e2da" stroke="#d3d2ca" stroke-width="1.1" stroke-linejoin="round"/><text x="9.4" y="12.0" font-family="Liberation Sans" font-weight="700" font-size="8.6" text-anchor="middle" fill="#c2c1b9">ab</text><path d="M17.2 8.4L18.6 14" stroke="#eeeeee" stroke-width="2"/><circle cx="19.9" cy="18" r="4.8" fill="#d3cccc"/></svg><svg style="position:absolute;left:847.0px;top:102.0px;overflow:visible;" width="24" height="24" viewBox="0 0 24 24"><path d="M5.8999999999999995 4.3H21.8V14.7H5.8999999999999995L1.3 9.5Z" fill="#e3e2da" stroke="#d3d2ca" stroke-width="1.1" stroke-linejoin="round"/><text x="13.45" y="12.0" font-family="Liberation Sans" font-weight="700" font-size="8.6" text-anchor="middle" fill="#c2c1b9">abc</text><path d="M8.6 19.3Q15.6 12.6 23 19.3Q15.6 25 8.6 19.3Z" fill="#f2f2f2" stroke="#d0d0d0" stroke-width="0.9"/><circle cx="15.9" cy="19" r="2.4" fill="#cfcfcf"/></svg><svg style="position:absolute;left:880.0px;top:102.0px;overflow:visible;" width="24" height="24" viewBox="0 0 24 24"><path d="M5.8999999999999995 4.3H21.8V14.7H5.8999999999999995L1.3 9.5Z" fill="#e3e2da" stroke="#d3d2ca" stroke-width="1.1" stroke-linejoin="round"/><text x="13.45" y="12.0" font-family="Liberation Sans" font-weight="700" font-size="8.6" text-anchor="middle" fill="#c2c1b9">abc</text><rect x="13.6" y="13.6" width="10" height="10" rx="1.6" fill="#d2d2d2"/><path d="M15.4 18.6H19.4V16L22.2 18.6L19.4 21.2V18.6" fill="#f6f6f6" stroke="#f6f6f6" stroke-width="1.6"/></svg><svg style="position:absolute;left:913.0px;top:102.0px;overflow:visible;" width="24" height="24" viewBox="0 0 24 24"><path d="M5.8999999999999995 4.3H21.8V14.7H5.8999999999999995L1.3 9.5Z" fill="#e3e2da" stroke="#d3d2ca" stroke-width="1.1" stroke-linejoin="round"/><text x="13.45" y="12.0" font-family="Liberation Sans" font-weight="700" font-size="8.6" text-anchor="middle" fill="#c2c1b9">abc</text><rect x="13.6" y="13.6" width="10" height="10" rx="1.6" fill="#d2d2d2"/><path d="M16 20A3 3 0 1 0 18.6 15.8" fill="none" stroke="#f6f6f6" stroke-width="1.6"/><path d="M16.2 16.4L19 14.2V17.8Z" fill="#f6f6f6"/></svg><svg style="position:absolute;left:946.0px;top:102.0px;overflow:visible;" width="24" height="24" viewBox="0 0 24 24"><path d="M5.8999999999999995 4.3H21.8V14.7H5.8999999999999995L1.3 9.5Z" fill="#e3e2da" stroke="#d3d2ca" stroke-width="1.1" stroke-linejoin="round"/><text x="13.45" y="12.0" font-family="Liberation Sans" font-weight="700" font-size="8.6" text-anchor="middle" fill="#c2c1b9">abc</text><rect x="13.6" y="13.6" width="10" height="10" rx="1.6" fill="#d7d4ca"/><path d="M15.6 22L16.2 19.8L20.6 15.4L22.2 17L17.8 21.4Z" fill="#f6f6f6"/></svg><div class="hd" style="left:984px;top:105px;height:17px"></div><svg style="position:absolute;left:995.0px;top:102.0px;overflow:visible;" width="24" height="24" viewBox="0 0 24 24"><defs><linearGradient id="gla" x1="0" y1="0" x2="1" y2="0"><stop offset="0" stop-color="#b0b0b0"/><stop offset="0.1" stop-color="#4a4a4a"/><stop offset="0.27" stop-color="#c8c8c8"/><stop offset="0.34" stop-color="#2a78d4"/><stop offset="0.5" stop-color="#7cc2fa"/><stop offset="0.66" stop-color="#2a78d4"/><stop offset="0.73" stop-color="#c8c8c8"/><stop offset="0.9" stop-color="#4a4a4a"/><stop offset="1" stop-color="#b0b0b0"/></linearGradient><linearGradient id="gsa" x1="0" y1="0" x2="0" y2="1"><stop offset="0" stop-color="#fff" stop-opacity="0.45"/><stop offset="0.5" stop-color="#fff" stop-opacity="0"/><stop offset="1" stop-color="#000" stop-opacity="0.15"/></linearGradient></defs><ellipse cx="12.6" cy="10.5" rx="11.9" ry="10.4" fill="url(#gla)"/><ellipse cx="12.6" cy="10.5" rx="11.9" ry="10.4" fill="url(#gsa)"/><path d="M2.2999999999999994 5.3H22.9M0.6999999999999993 10.5H24.5M2.2999999999999994 15.7H22.9M8.399999999999999 0.49999999999999967Q4.0 10.5 8.399999999999999 20.5M16.8 0.49999999999999967Q21.2 10.5 16.8 20.5" stroke="#eaf3fd" stroke-width="0.75" fill="none" opacity="0.9"/><ellipse cx="12.6" cy="10.5" rx="11.9" ry="10.4" fill="none" stroke="#3f82d8" stroke-width="1"/><rect x="16.1" y="15.2" width="8.6" height="8.4" rx="1.2" fill="#4a8f4a" stroke="#356e35" stroke-width="0.6"/><path d="M20.4 16.6V22.2M17.6 19.4H23.2" stroke="#fff" stroke-width="2"/><path d="M22.2 22.6H25.6L23.9 24.4Z" fill="#333"/></svg><svg style="position:absolute;left:1028.0px;top:102.0px;overflow:visible;" width="24" height="24" viewBox="0 0 24 24"><defs><linearGradient id="glb" x1="0" y1="0" x2="1" y2="0"><stop offset="0" stop-color="#b0b0b0"/><stop offset="0.1" stop-color="#4a4a4a"/><stop offset="0.27" stop-color="#c8c8c8"/><stop offset="0.34" stop-color="#2a78d4"/><stop offset="0.5" stop-color="#7cc2fa"/><stop offset="0.66" stop-color="#2a78d4"/><stop offset="0.73" stop-color="#c8c8c8"/><stop offset="0.9" stop-color="#4a4a4a"/><stop offset="1" stop-color="#b0b0b0"/></linearGradient><linearGradient id="gsb" x1="0" y1="0" x2="0" y2="1"><stop offset="0" stop-color="#fff" stop-opacity="0.45"/><stop offset="0.5" stop-color="#fff" stop-opacity="0"/><stop offset="1" stop-color="#000" stop-opacity="0.15"/></linearGradient></defs><ellipse cx="12.6" cy="10.5" rx="11.9" ry="10.4" fill="url(#glb)"/><ellipse cx="12.6" cy="10.5" rx="11.9" ry="10.4" fill="url(#gsb)"/><path d="M2.2999999999999994 5.3H22.9M0.6999999999999993 10.5H24.5M2.2999999999999994 15.7H22.9M8.399999999999999 0.49999999999999967Q4.0 10.5 8.399999999999999 20.5M16.8 0.49999999999999967Q21.2 10.5 16.8 20.5" stroke="#eaf3fd" stroke-width="0.75" fill="none" opacity="0.9"/><ellipse cx="12.6" cy="10.5" rx="11.9" ry="10.4" fill="none" stroke="#3f82d8" stroke-width="1"/><rect x="16.1" y="15.2" width="8.6" height="8.4" rx="1.2" fill="#4a8f4a" stroke="#356e35" stroke-width="0.6"/><circle cx="19.7" cy="18.8" r="2.1" fill="none" stroke="#fff" stroke-width="1.3"/><path d="M21.3 20.5L23.3 22.6" stroke="#fff" stroke-width="1.4"/></svg><div class="hd" style="left:1065px;top:105px;height:17px"></div><svg style="position:absolute;left:1078.0px;top:102.0px;overflow:visible;" width="24" height="24" viewBox="0 0 24 24"><path d="M11 2C7.5 2 7.2 3.5 7.2 5V7.2H11.5V8H4.8C3 8 2 9.8 2 12C2 14.2 3 16 4.8 16H7V13.2C7 11.5 8.2 10.4 9.8 10.4H13.8C15.2 10.4 16 9.4 16 8.2V5C16 3.2 14.5 2 11 2Z" fill="#3c78b5"/><circle cx="9.2" cy="4.6" r="0.9" fill="#fff"/><path d="M12.5 22C16 22 16.3 20.5 16.3 19V16.8H12V16H18.7C20.5 16 21.5 14.2 21.5 12C21.5 9.8 20.5 8 18.7 8H16.5V10.8C16.5 12.5 15.3 13.6 13.7 13.6H9.7C8.3 13.6 7.5 14.6 7.5 15.8V19C7.5 20.8 9 22 12.5 22Z" fill="#f6c93e"/><circle cx="14.3" cy="19.4" r="0.9" fill="#fff"/><path d="M17 17.8L22.5 20L17 22.2" fill="none" stroke="#222" stroke-width="1.1"/></svg><div class="hd" style="left:1114px;top:105px;height:17px"></div><svg style="position:absolute;left:1127.0px;top:102.0px;overflow:visible;" width="24" height="24" viewBox="0 0 24 24"><rect x="2.2" y="1.4" width="19.8" height="20.6" fill="#6a96ce" stroke="#1f2c40" stroke-width="1.2"/><rect x="2.2" y="1.4" width="4.8" height="20.6" fill="#2c3e55"/><text x="14.6" y="17.2" font-family="Liberation Sans" font-size="14" text-anchor="middle" fill="#fff">?</text></svg><div class="hd" style="left:1164px;top:105px;height:17px"></div><div class="hd" style="left:4px;top:144px;height:17px"></div><svg style="position:absolute;left:16.0px;top:141.0px;overflow:visible;" width="24" height="24" viewBox="0 0 24 24"><rect x="3.2" y="2.1" width="13.7" height="13.5" fill="#fae14e" stroke="#c9a227" stroke-width="1"/><path d="M1.4 0.6L9 3L23.6 0.6L19.8 11L15 17L4 15.4Z" fill="none" stroke="#555" stroke-width="0.9" stroke-dasharray="2.4 1.5"/><path d="M1.4 0.6L9 10L4 15.4M9 10L15 17" fill="none" stroke="#666" stroke-width="0.7" stroke-dasharray="2.2 1.5"/><path d="M11.2 8.8L24.2 19.2L19 19.4L21.6 24L19.4 25L17 20.4L13 23.6Z" fill="#fff" stroke="#777" stroke-width="0.9" stroke-linejoin="round" transform="translate(0 -1.6)"/></svg><svg style="position:absolute;left:46.5px;top:151px;" width="8" height="5" viewBox="0 0 8 5"><path d="M0 0H8L4 4.6Z" fill="#4d4d4d"/></svg><svg style="position:absolute;left:61.0px;top:141.0px;overflow:visible;" width="24" height="24" viewBox="0 0 24 24"><rect x="7.2" y="8.2" width="15.6" height="13.4" fill="#fae14e" stroke="#c9a227" stroke-width="1"/><rect x="4.2" y="3.2" width="14.4" height="13.2" fill="#d9dde1" stroke="#858a90" stroke-width="1"/><rect x="6.2" y="5.4" width="10.4" height="3" fill="#fff" stroke="#858a90" stroke-width="0.7"/><rect x="6.2" y="10.6" width="10.4" height="3" fill="#fff" stroke="#858a90" stroke-width="0.7"/></svg><svg style="position:absolute;left:91.5px;top:151px;" width="8" height="5" viewBox="0 0 8 5"><path d="M0 0H8L4 4.6Z" fill="#4d4d4d"/></svg><svg style="position:absolute;left:107.0px;top:141.0px;overflow:visible;" width="24" height="24" viewBox="0 0 24 24"><rect x="2.1" y="2.4" width="13.8" height="13.2" fill="#fae14e" stroke="#c9a227" stroke-width="1"/><rect x="6.1" y="6.2" width="13.8" height="13.4" fill="#fae14e" stroke="#c9a227" stroke-width="1"/><rect x="13" y="13.1" width="10.5" height="10.3" rx="1.8" fill="#d2222a"/><circle cx="18.25" cy="18.25" r="3.4" fill="#f3d0d0" stroke="#fff" stroke-width="1.1"/><path d="M16 20.6L20.6 16" stroke="#d2222a" stroke-width="2.2"/></svg><svg style="position:absolute;left:137px;top:151px;" width="8" height="5" viewBox="0 0 8 5"><path d="M0 0H8L4 4.6Z" fill="#4d4d4d"/></svg><div class="hd" style="left:155px;top:144px;height:17px"></div><svg style="position:absolute;left:168.0px;top:141.0px;overflow:visible;" width="24" height="24" viewBox="0 0 24 24"><rect x="0" y="0" width="24" height="24" fill="#5ea944"/><path d="M0 0H24V9Q12 15 0 9Z" fill="#85c46e" opacity="0.75"/><circle cx="13.9" cy="9.9" r="7" fill="#8fca7a" fill-opacity="0.55" stroke="#fff" stroke-width="2.1"/><path d="M8.6 15.2L3.4 20.4" stroke="#fff" stroke-width="3" stroke-linecap="round" opacity="0.95"/></svg><svg style="position:absolute;left:199.0px;top:141.0px;overflow:visible;" width="24" height="24" viewBox="0 0 24 24"><path d="M1.8 0.4L8 1.6L15 0.2L23 1.4V22.4L16 23.6L8 22.2L1.8 23.4Z" fill="#f4c938"/><path d="M12 0.6C10 5 15 8 13 12C11 16 17 18 15 23.4L19 23C21 18 15 16 17.5 12C20 8 14.5 5 16.5 0.4Z" fill="#5f9be8"/><path d="M1.8 17C6 15 10 20 14 18.5L13.6 21C10 22.5 6 18 1.8 20Z" fill="#3f7fd8"/><path d="M1.8 2L6 1.2L7 12L1.8 12.6Z" fill="#b8336a"/><path d="M3 1.4L9 3.6L3 5.4Z" fill="#4fae3a"/><rect x="7.4" y="9" width="3" height="5" fill="#2f8f8f"/><path d="M2 14.6L11 12.6" stroke="#fff" stroke-width="1"/><path d="M24.6 1.4L14.6 11.4" stroke="#6e3410" stroke-width="3.4" stroke-linecap="round"/><path d="M24.2 1.4L15 10.6" stroke="#a8581e" stroke-width="1.6" stroke-linecap="round"/><path d="M14.8 10.2L11.4 15.4L16.6 12.4Z" fill="#ddd" stroke="#444" stroke-width="0.7"/><path d="M11.4 15.4L3 19.6" stroke="#222" stroke-width="0.9"/></svg><div style="position:absolute;left:4px;top:173.80px;line-height:20px;height:20px;white-space:pre;font-size:15px;color:#000;letter-spacing:0.075px;">Browser</div><svg style="position:absolute;left:267px;top:178px;" width="11" height="11" viewBox="0 0 11 11"><rect x="0.5" y="0.5" width="10" height="10" rx="2.4" fill="none" stroke="#6a6662" stroke-width="1"/><rect x="2.5" y="4.3" width="4.4" height="4.4" rx="1" fill="none" stroke="#6a6662"/><path d="M4.3 4.3v-1.8h4.4v4.4h-1.8" fill="none" stroke="#6a6662"/></svg><svg style="position:absolute;left:281px;top:178px;" width="11" height="11" viewBox="0 0 11 11"><rect x="0.5" y="0.5" width="10" height="10" rx="2.4" fill="none" stroke="#6a6662" stroke-width="1"/><path d="M3 3 L8 8 M8 3 L3 8" stroke="#5a5652" stroke-width="1.9"/></svg><div style="position:absolute;left:0px;top:225px;width:294px;height:446px;background:#fff;border:1px solid #c0c0c0;"></div><div style="position:absolute;left:46px;top:226.80px;line-height:20px;height:20px;white-space:pre;font-size:15px;color:#000;letter-spacing:-0.015px;">Favoriten</div><div style="position:absolute;left:46px;top:247.80px;line-height:20px;height:20px;white-space:pre;font-size:15px;color:#000;letter-spacing:-0.286px;">Räumliche Lesezeichen</div><svg style="position:absolute;left:7.6px;top:253.7px;" width="6" height="8" viewBox="0 0 6 8"><path d="M0.5 0 L5 4 L0.5 8z" fill="#555"/></svg><div style="position:absolute;left:46px;top:268.80px;line-height:20px;height:20px;white-space:pre;font-size:15px;color:#000;letter-spacing:-0.033px;">Home</div><svg style="position:absolute;left:7.6px;top:274.7px;" width="6" height="8" viewBox="0 0 6 8"><path d="M0.5 0 L5 4 L0.5 8z" fill="#555"/></svg><div style="position:absolute;left:46px;top:289.80px;line-height:20px;height:20px;white-space:pre;font-size:15px;color:#000;letter-spacing:-0.172px;">/</div><svg style="position:absolute;left:7.6px;top:295.7px;" width="6" height="8" viewBox="0 0 6 8"><path d="M0.5 0 L5 4 L0.5 8z" fill="#555"/></svg><div style="position:absolute;left:46px;top:310.80px;line-height:20px;height:20px;white-space:pre;font-size:15px;color:#000;transform-origin:0 0;transform:scaleX(0.9408);">GeoPackage</div><div style="position:absolute;left:46px;top:331.80px;line-height:20px;height:20px;white-space:pre;font-size:15px;color:#000;letter-spacing:-0.139px;">SpatiaLite</div><div style="position:absolute;left:46px;top:352.80px;line-height:20px;height:20px;white-space:pre;font-size:15px;color:#000;transform-origin:0 0;transform:scaleX(0.9345);">PostGIS</div><div style="position:absolute;left:46px;top:373.80px;line-height:20px;height:20px;white-space:pre;font-size:15px;color:#000;transform-origin:0 0;transform:scaleX(0.9216);">MSSQL</div><div style="position:absolute;left:46px;top:394.80px;line-height:20px;height:20px;white-space:pre;font-size:15px;color:#000;transform-origin:0 0;transform:scaleX(0.9456);">DB2</div><div style="position:absolute;left:46px;top:415.80px;line-height:20px;height:20px;white-space:pre;font-size:15px;color:#000;letter-spacing:-0.221px;">WMS/WMTS</div><div style="position:absolute;left:46px;top:436.80px;line-height:20px;height:20px;white-space:pre;font-size:15px;color:#000;letter-spacing:0.013px;">Vector Tiles</div><div style="position:absolute;left:46px;top:457.80px;line-height:20px;height:20px;white-space:pre;font-size:15px;color:#000;letter-spacing:-0.363px;">XYZ Tiles</div><svg style="position:absolute;left:7.6px;top:463.7px;" width="6" height="8" viewBox="0 0 6 8"><path d="M0.5 0 L5 4 L0.5 8z" fill="#555"/></svg><div style="position:absolute;left:46px;top:478.80px;line-height:20px;height:20px;white-space:pre;font-size:15px;color:#000;transform-origin:0 0;transform:scaleX(0.9200);">WCS</div><div style="position:absolute;left:46px;top:499.80px;line-height:20px;height:20px;white-space:pre;font-size:15px;color:#000;letter-spacing:-0.372px;">WFS / OGC API - Features</div><div style="position:absolute;left:46px;top:520.80px;line-height:20px;height:20px;white-space:pre;font-size:15px;color:#000;transform-origin:0 0;transform:scaleX(0.9458);">OWS</div><div style="position:absolute;left:46px;top:541.80px;line-height:20px;height:20px;white-space:pre;font-size:15px;color:#000;letter-spacing:-0.026px;">ArcGIS-Map-Dienst</div><div style="position:absolute;left:46px;top:562.80px;line-height:20px;height:20px;white-space:pre;font-size:15px;color:#000;letter-spacing:-0.041px;">ArcGIS-Feature-Dienst</div><div style="position:absolute;left:46px;top:583.80px;line-height:20px;height:20px;white-space:pre;font-size:15px;color:#000;letter-spacing:-0.218px;">GeoNode</div><div style="position:absolute;left:141px;top:672px;width:14px;height:3px;background-image:radial-gradient(circle,#b0b0b0 0.6px,transparent 0.9px);background-size:3px 3px;"></div><div style="position:absolute;left:4px;top:677.80px;line-height:20px;height:20px;white-space:pre;font-size:15px;color:#000;transform-origin:0 0;transform:scaleX(0.9459);">Layer</div><svg style="position:absolute;left:267px;top:682px;" width="11" height="11" viewBox="0 0 11 11"><rect x="0.5" y="0.5" width="10" height="10" rx="2.4" fill="none" stroke="#6a6662" stroke-width="1"/><rect x="2.5" y="4.3" width="4.4" height="4.4" rx="1" fill="none" stroke="#6a6662"/><path d="M4.3 4.3v-1.8h4.4v4.4h-1.8" fill="none" stroke="#6a6662"/></svg><svg style="position:absolute;left:281px;top:682px;" width="11" height="11" viewBox="0 0 11 11"><rect x="0.5" y="0.5" width="10" height="10" rx="2.4" fill="none" stroke="#6a6662" stroke-width="1"/><path d="M3 3 L8 8 M8 3 L3 8" stroke="#5a5652" stroke-width="1.9"/></svg><div style="position:absolute;left:0px;top:729px;width:294px;height:424px;background:#fff;border:1px solid #c0c0c0;border-bottom:none;"></div><div style="position:absolute;left:2px;top:730px;width:291px;height:421px;overflow:hidden"><div class="cb" style="left:22px;top:3.2px;"></div><div style="position:absolute;left:42px;top:2.2px;width:16px;height:16px;background:#e8b32c;border:1px solid rgba(0,0,0,0.35)"></div><div style="position:absolute;left:64.7px;top:1.00px;line-height:20px;white-space:pre;letter-spacing:-0.34px;font-weight:700;font-style:italic;color:#808080;text-decoration:underline;">Anzahl</div><svg style="position:absolute;left:266px;top:2.0px" width="18" height="18" viewBox="0 0 18 18"><rect x="0.5" y="0.5" width="17" height="17" rx="3.5" fill="#ececec" stroke="#e0e0e0"/><rect x="4" y="6" width="10" height="6" fill="#f6f6f6" stroke="#6a6a6a" stroke-width="0.9"/><path d="M5.6 6v-1.6M7.8 6v-1.6M10.2 6v-1.6M12.4 6v-1.6M5.6 12v1.6M7.8 12v1.6M10.2 12v1.6M12.4 12v1.6" stroke="#6a6a6a" stroke-width="0.8"/></svg><div class="cb" style="left:22px;top:24.2px;"></div><div style="position:absolute;left:42px;top:23.2px;width:16px;height:16px;background:#c73a39;border:1px solid rgba(0,0,0,0.35)"></div><div style="position:absolute;left:64.7px;top:22.00px;line-height:20px;white-space:pre;letter-spacing:0.043px;font-weight:700;font-style:italic;color:#808080;">Gepuffert</div><svg style="position:absolute;left:266px;top:23.0px" width="18" height="18" viewBox="0 0 18 18"><rect x="0.5" y="0.5" width="17" height="17" rx="3.5" fill="#ececec" stroke="#e0e0e0"/><rect x="4" y="6" width="10" height="6" fill="#f6f6f6" stroke="#6a6a6a" stroke-width="0.9"/><path d="M5.6 6v-1.6M7.8 6v-1.6M10.2 6v-1.6M12.4 6v-1.6M5.6 12v1.6M7.8 12v1.6M10.2 12v1.6M12.4 12v1.6" stroke="#6a6a6a" stroke-width="0.8"/></svg><div class="cb" style="left:22px;top:45.2px;"></div><div style="position:absolute;left:42px;top:44.2px;width:16px;height:16px;background:#beb297;border:1px solid rgba(0,0,0,0.35)"></div><div style="position:absolute;left:64.7px;top:43.00px;line-height:20px;white-space:pre;letter-spacing:-0.34px;font-weight:700;font-style:italic;color:#808080;">Anzahl</div><svg style="position:absolute;left:266px;top:44.0px" width="18" height="18" viewBox="0 0 18 18"><rect x="0.5" y="0.5" width="17" height="17" rx="3.5" fill="#ececec" stroke="#e0e0e0"/><rect x="4" y="6" width="10" height="6" fill="#f6f6f6" stroke="#6a6a6a" stroke-width="0.9"/><path d="M5.6 6v-1.6M7.8 6v-1.6M10.2 6v-1.6M12.4 6v-1.6M5.6 12v1.6M7.8 12v1.6M10.2 12v1.6M12.4 12v1.6" stroke="#6a6a6a" stroke-width="0.8"/></svg><div class="cb" style="left:22px;top:66.2px;"></div><div style="position:absolute;left:46px;top:69.7px;width:7px;height:7px;border-radius:50%;background:#8c5b42;"></div><div style="position:absolute;left:64.7px;top:64.00px;line-height:20px;white-space:pre;letter-spacing:-0.421px;font-weight:700;font-style:italic;color:#808080;">14c_daten</div><div class="cb" style="left:22px;top:87.2px;"></div><svg style="position:absolute;left:24px;top:89.2px" width="10" height="10" viewBox="0 0 10 10"><path d="M1.2 5.2 L3.8 8.5 L8.8 1.2" fill="none" stroke="#111" stroke-width="1.7"/></svg><div style="position:absolute;left:46px;top:90.7px;width:7px;height:7px;border-radius:50%;background:#8b4726;"></div><div style="position:absolute;left:64.7px;top:85.00px;line-height:20px;white-space:pre;letter-spacing:-0.296px;font-weight:700;color:#000;">Extrahiert (Position)</div><svg style="position:absolute;left:266px;top:86.0px" width="18" height="18" viewBox="0 0 18 18"><rect x="0.5" y="0.5" width="17" height="17" rx="3.5" fill="#ececec" stroke="#e0e0e0"/><rect x="4" y="6" width="10" height="6" fill="#f6f6f6" stroke="#6a6a6a" stroke-width="0.9"/><path d="M5.6 6v-1.6M7.8 6v-1.6M10.2 6v-1.6M12.4 6v-1.6M5.6 12v1.6M7.8 12v1.6M10.2 12v1.6M12.4 12v1.6" stroke="#6a6a6a" stroke-width="0.8"/></svg><div class="cb" style="left:22px;top:108.2px;"></div><div style="position:absolute;left:42px;top:107.2px;width:16px;height:16px;background:#7e8c92;border:1px solid rgba(0,0,0,0.35)"></div><div style="position:absolute;left:64.7px;top:106.00px;line-height:20px;white-space:pre;letter-spacing:-0.244px;font-weight:700;font-style:italic;color:#808080;">Aufgelöst</div><svg style="position:absolute;left:266px;top:107.0px" width="18" height="18" viewBox="0 0 18 18"><rect x="0.5" y="0.5" width="17" height="17" rx="3.5" fill="#ececec" stroke="#e0e0e0"/><rect x="4" y="6" width="10" height="6" fill="#f6f6f6" stroke="#6a6a6a" stroke-width="0.9"/><path d="M5.6 6v-1.6M7.8 6v-1.6M10.2 6v-1.6M12.4 6v-1.6M5.6 12v1.6M7.8 12v1.6M10.2 12v1.6M12.4 12v1.6" stroke="#6a6a6a" stroke-width="0.8"/></svg><div class="cb" style="left:22px;top:129.2px;"></div><div style="position:absolute;left:42px;top:128.2px;width:16px;height:16px;background:#84b568;border:1px solid rgba(0,0,0,0.35)"></div><div style="position:absolute;left:64.7px;top:127.00px;line-height:20px;white-space:pre;letter-spacing:-0.266px;font-weight:700;font-style:italic;color:#808080;">Vereinigungen</div><svg style="position:absolute;left:266px;top:128.0px" width="18" height="18" viewBox="0 0 18 18"><rect x="0.5" y="0.5" width="17" height="17" rx="3.5" fill="#ececec" stroke="#e0e0e0"/><rect x="4" y="6" width="10" height="6" fill="#f6f6f6" stroke="#6a6a6a" stroke-width="0.9"/><path d="M5.6 6v-1.6M7.8 6v-1.6M10.2 6v-1.6M12.4 6v-1.6M5.6 12v1.6M7.8 12v1.6M10.2 12v1.6M12.4 12v1.6" stroke="#6a6a6a" stroke-width="0.8"/></svg><div class="cb" style="left:22px;top:150.2px;"></div><svg style="position:absolute;left:24px;top:152.2px" width="10" height="10" viewBox="0 0 10 10"><path d="M1.2 5.2 L3.8 8.5 L8.8 1.2" fill="none" stroke="#111" stroke-width="1.7"/></svg><div style="position:absolute;left:42px;top:149.2px;width:16px;height:16px;background:#f4a7b5;border:1px solid rgba(0,0,0,0.35)"></div><div style="position:absolute;left:64.7px;top:148.00px;line-height:20px;white-space:pre;letter-spacing:-0.35px;font-weight:700;color:#000;">kantonsgrenzen K4kant19970101gf_ch2007Poly</div><div class="cb" style="left:22px;top:171.2px;"></div><div style="position:absolute;left:42px;top:170.2px;width:16px;height:16px;background:#6f9f70;border:1px solid rgba(0,0,0,0.35)"></div><div style="position:absolute;left:64.7px;top:169.00px;line-height:20px;white-space:pre;letter-spacing:-0.52px;font-weight:700;font-style:italic;color:#808080;">seen k4seenyyyymmdd11_ch2007Poly</div></div><div style="position:absolute;left:0px;top:1152px;width:294px;height:15px;background:#e4e4e4;border:1px solid #bdbdbd;"></div><div style="position:absolute;left:14px;top:1153px;width:194px;height:13px;background:linear-gradient(#ffffff,#f1f1f1);border:1px solid #c4c4c4;border-radius:1px;"></div><div style="position:absolute;left:2px;top:1153px;width:12px;height:13px;background:#f0f0f0;"></div><div style="position:absolute;left:279px;top:1153px;width:14px;height:13px;background:#f0f0f0;border-left:1px solid #c8c8c8;"></div><svg style="position:absolute;left:4px;top:1155px;" width="6" height="9" viewBox="0 0 6 9"><path d="M5.5 0.5 L0.5 4.5 L5.5 8.5z" fill="#444"/></svg><svg style="position:absolute;left:283px;top:1155px;" width="6" height="9" viewBox="0 0 6 9"><path d="M0.5 0.5 L5.5 4.5 L0.5 8.5z" fill="#444"/></svg><div style="position:absolute;left:300px;top:173px;width:1148px;height:993px;background:#fff;border:1px solid #adadad;"></div><svg style="position:absolute;left:301px;top:173px;" width="1146" height="992" viewBox="0 0 1146 992"><path d="M139.0 427.0 L112.6 437.0 L83.4 448.0 L80.0 445.2 L63.9 462.3 L71.2 475.7 L70.4 492.0 L76.9 493.6 L99.6 480.6 L112.6 478.2 L139.0 477.0Z" fill="#f4a6b4" stroke="#2a2a2a" stroke-width="0.9" stroke-linejoin="round"/><path d="M139.0 478.0 L112.6 478.2 L99.6 480.6 L76.9 493.6 L70.4 492.0 L65.5 498.5 L63.0 506.6 L68.7 516.4 L65.5 522.9 L59.0 528.6 L54.1 529.7 L50.9 532.6 L50.9 535.0 L46.0 537.5 L42.7 540.7 L20.8 553.7 L18.4 557.0 L-1.0 576.7 L-1.0 690.6 L2.0 681.5 L16.7 666.9 L20.8 664.4 L24.0 654.7 L37.0 641.7 L42.7 640.0 L52.5 640.9 L65.5 635.2 L69.6 631.1 L73.6 629.5 L82.6 619.7 L91.5 623.0 L98.0 621.4 L112.6 619.7 L139.0 619.0Z" fill="#f4a6b4" stroke="#2a2a2a" stroke-width="0.9" stroke-linejoin="round"/><path d="M-1.0 711.7 L10.2 700.2 L13.5 702.6 L10.2 710.7 L16.7 719.7 L24.0 714.0 L25.7 718.0 L28.0 718.0 L27.3 727.0 L18.4 734.3 L6.2 738.4 L-1.0 744.2Z" fill="#f4a6b4" stroke="#2a2a2a" stroke-width="0.9" stroke-linejoin="round"/><path d="M199.0 807.0 L205.7 816.2 L214.0 823.7 L212.3 828.7 L219.0 836.2 L219.8 844.5 L225.7 853.7 L234.0 866.2 L237.3 872.3 L242.3 871.2 L250.7 865.0 L253.0 867.8 L260.7 872.0 L263.0 871.0 L264.0 866.0 L270.7 860.7 L275.7 860.3 L278.0 861.0 L283.0 856.0 L288.0 849.8 L295.7 852.8 L300.7 851.0 L305.7 855.3 L312.0 858.3 L317.3 853.7 L322.3 851.0 L329.0 845.3 L336.5 842.8 L336.5 837.8 L343.0 833.3 L353.0 835.0 L355.7 832.0 L355.7 825.0 L362.3 823.3 L364.8 828.7 L374.0 830.3 L384.8 828.0 L391.5 835.3 L396.5 836.7 L399.0 844.5 L402.3 847.3 L409.0 841.0 L414.0 842.8 L423.0 850.3 L427.3 846.7 L439.0 850.3 L443.0 847.8 L442.3 842.8 L444.8 827.8 L451.5 819.5 L472.3 818.7 L474.8 816.2 L479.0 807.0Z" fill="#f4a6b4" stroke="#2a2a2a" stroke-width="0.9" stroke-linejoin="round"/><path d="M683.0 807.0 L684.8 816.2 L684.4 819.0 L694.8 820.3 L699.8 823.3 L704.8 827.4 L707.0 826.6 L709.0 830.3 L712.0 828.3 L712.3 825.8 L714.0 823.7 L713.2 819.5 L716.5 816.2 L717.0 807.0Z" fill="#f4a6b4" stroke="#2a2a2a" stroke-width="0.9" stroke-linejoin="round"/><path d="M718.0 807.0 L717.3 816.2 L714.4 825.0 L716.0 833.7 L714.4 839.0 L719.8 844.0 L726.5 836.2 L729.8 831.2 L728.6 827.8 L730.7 820.3 L727.8 816.2 L726.0 807.0Z" fill="#f4a6b4" stroke="#2a2a2a" stroke-width="0.9" stroke-linejoin="round"/><path d="M755.0 807.0 L749.8 816.2 L742.3 817.0 L736.0 820.0 L736.5 825.0 L732.8 828.7 L732.0 832.0 L733.0 839.0 L737.0 845.0 L735.7 850.3 L734.4 847.8 L733.6 842.0 L728.0 838.2 L720.2 847.0 L721.5 851.0 L720.7 853.7 L723.0 857.0 L724.8 863.2 L727.8 864.5 L724.0 866.6 L719.4 873.7 L718.6 879.5 L724.0 877.8 L729.0 874.0 L732.3 877.0 L735.7 877.8 L741.5 877.0 L742.0 882.0 L747.3 883.7 L751.5 881.6 L752.3 875.3 L756.5 869.0 L757.3 863.2 L761.0 861.0 L765.7 851.0 L763.0 850.8 L762.3 847.0 L757.3 843.2 L752.3 841.0 L747.8 840.8 L748.6 837.8 L746.5 835.3 L745.7 827.4 L740.2 825.8 L742.3 822.0 L746.5 819.5 L755.0 812.0Z" fill="#f4a6b4" stroke="#2a2a2a" stroke-width="0.9" stroke-linejoin="round"/><path d="M11.9 581.4 L34.6 561.9 L35.4 563.5 L32.2 569.2 L15.9 581.4Z" fill="#fff" stroke="#2a2a2a" stroke-width="0.9"/><path d="M716.5 816.5 L717.3 816.5 L716.0 821.0 L714.2 825.0 L713.6 823.0 L713.4 819.5Z" fill="#ddd" stroke="#2a2a2a" stroke-width="0.6"/><circle cx="87.9" cy="526.6" r="4.3" fill="#8d4a24" stroke="#2b1d12" stroke-width="1"/><circle cx="96.7" cy="555.7" r="4.3" fill="#8d4a24" stroke="#2b1d12" stroke-width="1"/><circle cx="100.4" cy="554.6" r="4.3" fill="#8d4a24" stroke="#2b1d12" stroke-width="1"/><circle cx="55.7" cy="569.7" r="4.3" fill="#8d4a24" stroke="#2b1d12" stroke-width="1"/><circle cx="89.9" cy="596.8" r="4.3" fill="#8d4a24" stroke="#2b1d12" stroke-width="1"/><circle cx="103.7" cy="617.4" r="4.3" fill="#8d4a24" stroke="#2b1d12" stroke-width="1"/><circle cx="109.4" cy="621.0" r="4.3" fill="#8d4a24" stroke="#2b1d12" stroke-width="1"/><circle cx="47.6" cy="637.6" r="4.3" fill="#8d4a24" stroke="#2b1d12" stroke-width="1"/><circle cx="13.8" cy="693.8" r="4.3" fill="#8d4a24" stroke="#2b1d12" stroke-width="1"/><circle cx="2.9" cy="713.7" r="4.3" fill="#8d4a24" stroke="#2b1d12" stroke-width="1"/><circle cx="115.0" cy="525.0" r="4.3" fill="#8d4a24" stroke="#2b1d12" stroke-width="1"/><circle cx="116.0" cy="615.0" r="4.3" fill="#8d4a24" stroke="#2b1d12" stroke-width="1"/></svg><div style="position:absolute;left:1458px;top:173.80px;line-height:20px;height:20px;white-space:pre;font-size:15px;color:#000;letter-spacing:0.018px;">Verarbeitungswerkzeuge</div><svg style="position:absolute;left:1892.5px;top:178px;" width="11" height="11" viewBox="0 0 11 11"><rect x="0.5" y="0.5" width="10" height="10" rx="2.4" fill="none" stroke="#6a6662" stroke-width="1"/><rect x="2.5" y="4.3" width="4.4" height="4.4" rx="1" fill="none" stroke="#6a6662"/><path d="M4.3 4.3v-1.8h4.4v4.4h-1.8" fill="none" stroke="#6a6662"/></svg><svg style="position:absolute;left:1906.5px;top:178px;" width="11" height="11" viewBox="0 0 11 11"><rect x="0.5" y="0.5" width="10" height="10" rx="2.4" fill="none" stroke="#6a6662" stroke-width="1"/><path d="M3 3 L8 8 M8 3 L3 8" stroke="#5a5652" stroke-width="1.9"/></svg><div style="position:absolute;left:1454px;top:225px;width:466px;height:27px;background:#fff;border:1px solid #b4b4b4;border-radius:3px;"></div><svg style="position:absolute;left:1462px;top:232px;" width="14" height="14" viewBox="0 0 14 14"><circle cx="5.5" cy="5.5" r="4.2" fill="none" stroke="#8e8e8e" stroke-width="1.1"/><path d="M8.7 8.7 L13 13" stroke="#8e8e8e" stroke-width="1.3"/></svg><div style="position:absolute;left:1483.6px;top:228.80px;line-height:20px;height:20px;white-space:pre;font-size:15px;color:#000;letter-spacing:0.006px;">spatial</div><svg style="position:absolute;left:1897.5px;top:232.3px;" width="13.5" height="10.4" viewBox="0 0 15 11"><path d="M5 0.5 H14.5 V10.5 H5 L0.5 5.5z" fill="#8c8c8c"/><path d="M7.5 3.2 L11.8 7.8 M11.8 3.2 L7.5 7.8" stroke="#fff" stroke-width="1"/></svg><div style="position:absolute;left:1454px;top:251px;width:466px;height:916px;background:#fff;border:1px solid #b8b8b8;"></div><div style="position:absolute;left:1455px;top:379px;width:463px;height:21px;background:#308cc6;"></div><div style="position:absolute;left:1500px;top:253.70px;line-height:20px;height:20px;white-space:pre;font-size:15px;color:#000;letter-spacing:0.021px;">Kürzlich verwendet</div><svg style="position:absolute;left:1461.8px;top:259.6px;" width="6" height="8" viewBox="0 0 6 8"><path d="M0.5 0 L5 4 L0.5 8z" fill="#555"/></svg><div style="position:absolute;left:1500px;top:274.70px;line-height:20px;height:20px;white-space:pre;font-size:15px;color:#000;letter-spacing:-0.043px;">Datenbank</div><svg style="position:absolute;left:1460.8px;top:281.6px;" width="8" height="6" viewBox="0 0 8 6"><path d="M0 0.5 L8 0.5 L4 5z" fill="#555"/></svg><div style="position:absolute;left:1520.1px;top:295.70px;line-height:20px;height:20px;white-space:pre;font-size:15px;color:#000;letter-spacing:-0.074px;">In SpatiaLite exportieren</div><div style="position:absolute;left:1520.1px;top:316.70px;line-height:20px;height:20px;white-space:pre;font-size:15px;color:#000;letter-spacing:-0.122px;">SpatiaLite-SQL ausführen</div><div style="position:absolute;left:1520.1px;top:337.70px;line-height:20px;height:20px;white-space:pre;font-size:15px;color:#000;letter-spacing:-0.062px;">SpatiaLite-SQL ausführen (registrierte DB)</div><div style="position:absolute;left:1500px;top:358.70px;line-height:20px;height:20px;white-space:pre;font-size:15px;color:#000;letter-spacing:0.063px;">Vektoren allgemein</div><svg style="position:absolute;left:1460.8px;top:365.6px;" width="8" height="6" viewBox="0 0 8 6"><path d="M0 0.5 L8 0.5 L4 5z" fill="#555"/></svg><div style="position:absolute;left:1520.1px;top:379.70px;line-height:20px;height:20px;white-space:pre;font-size:15px;color:#fff;letter-spacing:-0.002px;">Attribute nach Position verknüpfen (Zusammenfassung)</div><div style="position:absolute;left:1520.1px;top:400.70px;line-height:20px;height:20px;white-space:pre;font-size:15px;color:#000;letter-spacing:0.018px;">Attribute nach Position zusammenfügen</div><div style="position:absolute;left:1520.1px;top:421.70px;line-height:20px;height:20px;white-space:pre;font-size:15px;color:#000;letter-spacing:-0.196px;">Räumlichen Index erzeugen</div><svg style="position:absolute;left:8.100000000000001px;top:200.8px;" width="16" height="16" viewBox="0 0 16 16"><rect x="1" y="1" width="11.5" height="11.5" fill="#fbfbfb" stroke="#6a6a6a" stroke-width="1.1"/><circle cx="12.3" cy="12.3" r="2.7" fill="#fff" stroke="#4d9a4d" stroke-width="1.3"/></svg><svg style="position:absolute;left:33.2px;top:200.8px;" width="16" height="16" viewBox="0 0 16 16"><g transform="translate(8 8) scale(1.18) translate(-8 -8)"><path d="M13.8 6.6A6 6 0 0 0 3.4 4L1.6 2.4V7.4H6.8L5 5.6A3.6 3.6 0 0 1 11.4 6.9Z" fill="#4f8fd6" stroke="#3772b8" stroke-width="0.5"/><path d="M2.2 9.4A6 6 0 0 0 12.6 12L14.4 13.6V8.6H9.2L11 10.4A3.6 3.6 0 0 1 4.6 9.1Z" fill="#4f8fd6" stroke="#3772b8" stroke-width="0.5"/></g></svg><svg style="position:absolute;left:58.0px;top:200.8px;" width="16" height="16" viewBox="0 0 16 16"><path d="M1 1.4H15L9.6 8V14.6L6.4 12.6V8Z" fill="#5f8dc6" stroke="#3f6ea8" stroke-width="0.8" stroke-linejoin="round"/><path d="M1.4 1.4H14.6" stroke="#f2d43a" stroke-width="1.8"/></svg><svg style="position:absolute;left:83.4px;top:200.8px;" width="16" height="16" viewBox="0 0 16 16"><path d="M2 1.5V14M2 4.5H5M2 10.5H5" fill="none" stroke="#8a8a8a" stroke-width="1"/><rect x="4.2" y="3" width="3" height="3" fill="#fbe3c0" stroke="#e8901c" stroke-width="0.9"/><rect x="4.2" y="9" width="3" height="3" fill="#fbe3c0" stroke="#e8901c" stroke-width="0.9"/><path d="M11 0.6L15.4 6H12.8V14.6H9.2V6H6.6Z" fill="#4a7ab8" stroke="#2f5a96" stroke-width="0.6"/></svg><svg style="position:absolute;left:107.8px;top:200.8px;" width="16" height="16" viewBox="0 0 16 16"><circle cx="8" cy="8" r="7.2" fill="#5f8dc6" stroke="#4a78b4" stroke-width="0.7"/><text x="8" y="12.4" font-family="Liberation Serif" font-style="italic" font-weight="700" font-size="12.5" text-anchor="middle" fill="#fff">i</text></svg><svg style="position:absolute;left:24.0px;top:228.7px;" width="16" height="16" viewBox="0 0 16 16"><path d="M8 0.8L10.2 5.6L15.4 6.2L11.5 9.7L12.6 14.9L8 12.3L3.4 14.9L4.5 9.7L0.6 6.2L5.8 5.6Z" fill="#f9ea55" stroke="#d4a90c" stroke-width="1" stroke-linejoin="round"/></svg><svg style="position:absolute;left:24.0px;top:249.7px;" width="16" height="16" viewBox="0 0 16 16"><path d="M3 1.5H14.5V14.5H3.5C2 14.5 1.5 13.5 1.5 12.4C1.5 11.4 2.2 11 3 11Z" fill="#e0e0e0" stroke="#9a9a9a" stroke-width="0.9"/><path d="M3 11C4.2 11 4.6 11.8 4.6 12.8C4.6 13.8 4 14.5 3.5 14.5" fill="none" stroke="#9a9a9a" stroke-width="0.8"/><path d="M9.3 1.2H12V6L10.6 7L9.3 6Z" fill="#6a96ce" stroke="#3f6ea8" stroke-width="0.7"/></svg><svg style="position:absolute;left:24.0px;top:270.7px;" width="16" height="16" viewBox="0 0 16 16"><path d="M1.5 14.5V1.5H6L7.2 3.2H14.5V14.5Z" fill="#fafafa" stroke="#7a7a7a" stroke-width="0.9" stroke-linejoin="round"/><path d="M4.6 9L8 5.8L11.4 9M5.8 8.4V12H10.2V8.4" fill="none" stroke="#333" stroke-width="1"/></svg><svg style="position:absolute;left:24.0px;top:291.7px;" width="16" height="16" viewBox="0 0 16 16"><path d="M1.5 14.5V1.5H6L7.2 3.2H14.5V14.5Z" fill="#f3f3f3" stroke="#8a8a8a" stroke-width="0.9" stroke-linejoin="round"/></svg><svg style="position:absolute;left:24.0px;top:312.7px;" width="16" height="16" viewBox="0 0 16 16"><path d="M0.8 6L8 3L15.2 6L8 9.4Z" fill="#f1cf33" stroke="#5e4c08" stroke-width="0.7" stroke-linejoin="round"/><circle cx="8" cy="5" r="4.6" fill="#a3bfe2" stroke="#6d8fc0" stroke-width="0.5"/><path d="M5 3.2q1.5 -2 3 -1q0.3 1.6 -1 2.6q-0.6 2 -1.8 0.6q-1 -1 -0.2 -2.2zM9 3.6q1.6 -1 2.8 0.3q0 2.2 -1.6 2.8q-1.6 -1 -1.2 -3.1z" fill="#3d5f95"/><path d="M0.8 6L8 9.4V15L0.8 11.4Z" fill="#dfb214" stroke="#5e4c08" stroke-width="0.7" stroke-linejoin="round"/><path d="M8 9.4L15.2 6V11.4L8 15Z" fill="#f7e76f" stroke="#5e4c08" stroke-width="0.7" stroke-linejoin="round"/></svg><svg style="position:absolute;left:24.0px;top:333.7px;" width="16" height="16" viewBox="0 0 16 16"><path d="M0.8 15.4C1.5 11 4.5 5 9 2.8C11.5 1.6 13.5 1 15.2 0.4C15.2 2.5 14 5.6 11.6 7.8C9.4 10 6 11.2 3.4 12Z" fill="#a9c1de" stroke="#4a6a94" stroke-width="0.8" stroke-linejoin="round"/><path d="M0.8 15.4C3 10.6 7.5 5 14 1.4" fill="none" stroke="#4a6a94" stroke-width="0.7"/></svg><svg style="position:absolute;left:24.0px;top:354.7px;" width="16" height="16" viewBox="0 0 16 16"><path d="M3 1.6C0.8 2.6 0.6 6 1.6 8C2.4 9.6 3.8 9.6 4.4 8.6C4.4 10.6 4.6 12.4 5.4 13.6C6 14.6 7.4 14.6 7.6 13.4L7.8 11C9 11.4 10.4 11.2 11.4 10.6C11.8 11.6 12.8 11.8 13.8 11.4C15 10.8 14.6 10 13.8 10.2C13.2 10.4 12.8 10 13 9.2C14.6 7 15.2 4.2 13.6 2.4C12.4 1 10 1 8.6 1.8C7 0.8 4.6 0.8 3 1.6Z" fill="#5f8dc6" stroke="#365f96" stroke-width="0.8" stroke-linejoin="round"/><path d="M8.6 1.8C9.8 3.6 10.2 6.4 9.8 8.4M4.4 8.6C4.6 6 5.2 4 6.4 2.6" fill="none" stroke="#2f5588" stroke-width="0.7"/><circle cx="11.6" cy="4.6" r="0.6" fill="#fff"/></svg><svg style="position:absolute;left:24.0px;top:375.7px;" width="16" height="16" viewBox="0 0 16 16"><path d="M1.2 1.6C5 1.2 11 3.2 15 7.2C11.5 9 7 11.5 1.6 14.6C5 10.4 5.6 5.6 1.2 1.6Z" fill="#6a96ce" stroke="#365f96" stroke-width="0.7" stroke-linejoin="round"/><path d="M5 2.4C7.8 5.6 7.6 9.6 5.6 12.4M9 4C10.4 6 10.2 8.2 9.2 10.2" fill="none" stroke="#365f96" stroke-width="0.6"/></svg><svg style="position:absolute;left:24.0px;top:396.7px;" width="16" height="16" viewBox="0 0 16 16"><rect x="0.5" y="0.8" width="15" height="14.4" rx="2.4" fill="#6a96ce"/><text x="8" y="10.4" font-family="Liberation Sans" font-size="6" font-weight="700" text-anchor="middle" fill="#fff">DB2</text></svg><svg style="position:absolute;left:24.0px;top:417.7px;" width="16" height="16" viewBox="0 0 16 16"><ellipse cx="8" cy="8" rx="7.3" ry="6.6" fill="#9dbbe0" stroke="#5d82b8" stroke-width="0.9"/><path d="M3 5q1.5 -2.5 3.5 -1.5q0.5 2 -1 3.5q-0.5 2.5 -2 1q-1 -1.5 -0.5 -3zM8.5 4q2.5 -1.5 4 0.5q0 3.5 -2 4.5q-2 -1 -2 -5zM6 10.5q1.5 0 2 2l-1.5 0.5z" fill="#3d5f95"/></svg><svg style="position:absolute;left:24.0px;top:438.7px;" width="16" height="16" viewBox="0 0 16 16"><rect x="0.8" y="0.8" width="14.4" height="14.4" rx="1" fill="#2f3d52"/><g fill="#8fa9c9"><rect x="2" y="2" width="3.2" height="3.2"/><rect x="6.4" y="2" width="3.2" height="3.2"/><rect x="10.8" y="2" width="3.2" height="3.2"/><rect x="2" y="6.4" width="3.2" height="3.2"/><rect x="6.4" y="6.4" width="3.2" height="3.2" fill="#5f7fa8"/><rect x="10.8" y="6.4" width="3.2" height="3.2"/><rect x="2" y="10.8" width="3.2" height="3.2" fill="#5f7fa8"/><rect x="6.4" y="10.8" width="3.2" height="3.2"/><rect x="10.8" y="10.8" width="3.2" height="3.2" fill="#5f7fa8"/></g></svg><svg style="position:absolute;left:24.0px;top:459.7px;" width="16" height="16" viewBox="0 0 16 16"><g fill="#5b8dc9"><rect x="1" y="1" width="3.8" height="3.8"/><rect x="6.1" y="1" width="3.8" height="3.8"/><rect x="11.2" y="1" width="3.8" height="3.8"/><rect x="1" y="6.1" width="3.8" height="3.8"/><rect x="6.1" y="6.1" width="3.8" height="3.8"/><rect x="11.2" y="6.1" width="3.8" height="3.8"/><rect x="1" y="11.2" width="3.8" height="3.8"/><rect x="6.1" y="11.2" width="3.8" height="3.8"/><rect x="11.2" y="11.2" width="3.8" height="3.8"/></g></svg><svg style="position:absolute;left:24.0px;top:480.7px;" width="16" height="16" viewBox="0 0 16 16"><ellipse cx="8" cy="8" rx="7.3" ry="6.6" fill="#2f4a73" stroke="#1f3352" stroke-width="0.9"/><path d="M1 6H15M1 10H15M8 1.4V14.6M4.6 2.2Q2.4 8 4.6 13.8M11.4 2.2Q13.6 8 11.4 13.8" fill="none" stroke="#c9d8ec" stroke-width="0.7"/><rect x="4.5" y="4" width="7" height="8" fill="none" stroke="#e3ecf7" stroke-width="0.8"/></svg><svg style="position:absolute;left:24.0px;top:501.7px;" width="16" height="16" viewBox="0 0 16 16"><ellipse cx="8" cy="8" rx="7.3" ry="6.6" fill="#fdfdfd" stroke="#5b8dc9" stroke-width="0.9"/><path d="M1 6H15M1 10H15M8 1.4V14.6M4.6 2.2Q2.4 8 4.6 13.8M11.4 2.2Q13.6 8 11.4 13.8" fill="none" stroke="#8fb2de" stroke-width="0.7"/><path d="M4 5L7.2 12L10 5.4L12.4 7" fill="none" stroke="#333" stroke-width="0.9"/></svg><svg style="position:absolute;left:24.0px;top:522.7px;" width="16" height="16" viewBox="0 0 16 16"><ellipse cx="8" cy="8" rx="7.3" ry="6.6" fill="#fdfdfd" stroke="#5b8dc9" stroke-width="0.9"/><path d="M1 6H15M1 10H15M8 1.4V14.6M4.6 2.2Q2.4 8 4.6 13.8M11.4 2.2Q13.6 8 11.4 13.8" fill="none" stroke="#8fb2de" stroke-width="0.7"/></svg><svg style="position:absolute;left:24.0px;top:543.7px;" width="16" height="16" viewBox="0 0 16 16"><ellipse cx="8" cy="8" rx="7.3" ry="6.6" fill="#86a9d8" stroke="#4a70a8" stroke-width="0.9"/><path d="M3 5q1.5 -2.5 3.5 -1.5q0.5 2 -1 3.5q-0.5 2.5 -2 1q-1 -1.5 -0.5 -3zM8.5 4q2.5 -1.5 4 0.5q0 3.5 -2 4.5q-2 -1 -2 -5zM6 10.5q1.5 0 2 2l-1.5 0.5z" fill="#2c3e5c"/><path d="M2 10L5 8L6 12L4 15Z" fill="#333"/></svg><svg style="position:absolute;left:24.0px;top:564.7px;" width="16" height="16" viewBox="0 0 16 16"><ellipse cx="8" cy="8" rx="7.3" ry="6.6" fill="#fdfdfd" stroke="#5b8dc9" stroke-width="0.9"/><path d="M1 6H15M1 10H15M8 1.4V14.6M4.6 2.2Q2.4 8 4.6 13.8M11.4 2.2Q13.6 8 11.4 13.8" fill="none" stroke="#8fb2de" stroke-width="0.7"/><path d="M2 10L5 8L6 12L4 15Z" fill="#333"/><path d="M6 5L8.6 10L11 5.4" fill="none" stroke="#333" stroke-width="0.8"/></svg><svg style="position:absolute;left:24.0px;top:585.7px;" width="16" height="16" viewBox="0 0 16 16"><g stroke="#4f86c6" stroke-width="2.3" stroke-linecap="round"><path d="M8 1.6V14.4M2.5 4.8L13.5 11.2M2.5 11.2L13.5 4.8"/></g><g fill="#4f86c6"><circle cx="8" cy="1.9" r="1.7"/><circle cx="8" cy="14.1" r="1.7"/><circle cx="2.7" cy="4.9" r="1.7"/><circle cx="13.3" cy="11.1" r="1.7"/><circle cx="2.7" cy="11.1" r="1.7"/><circle cx="13.3" cy="4.9" r="1.7"/></g><circle cx="8" cy="8" r="1.3" fill="#fff"/></svg><svg style="position:absolute;left:8.0px;top:704.8px;" width="16" height="16" viewBox="0 0 16 16"><path d="M1 8L6 5L9 10L4 13Z" fill="#e8c11f"/><path d="M1 8L4 13L2.6 10.6Z" fill="#d23a3a"/><path d="M1 8.6L3.4 6.8L5 9L2.4 10.6Z" fill="#4f86c6"/><path d="M2 10L4.6 8.6L6 11L3.8 12.6Z" fill="#d23a3a"/><path d="M15.4 0.6L9 7.2" stroke="#d9962a" stroke-width="2.2" stroke-linecap="round"/><path d="M5.6 8.2L9.4 5.6L11.6 9.4L8 12.4Z" fill="#e7b86a" stroke="#b8842c" stroke-width="0.6"/></svg><svg style="position:absolute;left:33.0px;top:704.8px;" width="16" height="16" viewBox="0 0 16 16"><rect x="1" y="5" width="9" height="9" fill="none" stroke="#666" stroke-width="1"/><rect x="3.6" y="2.6" width="9" height="9" fill="#f3f3f3" stroke="#666" stroke-width="1"/><path d="M6.6 1V8.6M9.4 1V8.6M6.6 1H9.4" stroke="#3f6ea8" stroke-width="1" fill="none"/><circle cx="12.6" cy="12.4" r="2.8" fill="#e9f5e9" stroke="#4d9a4d" stroke-width="1.4"/></svg><svg style="position:absolute;left:58.400000000000006px;top:704.8px;" width="16" height="16" viewBox="0 0 16 16"><path d="M0.8 7.2Q7 0.6 14.2 7.2Q7 13 0.8 7.2Z" fill="#f4f4f4" stroke="#8a8a8a" stroke-width="0.9"/><circle cx="7.4" cy="6.8" r="3.1" fill="#5f8dc6" stroke="#3f6ea8" stroke-width="0.6"/><circle cx="7.4" cy="6.8" r="1.4" fill="#1a1a1a"/><path d="M11 12.4H16L13.5 15Z" fill="#333"/><path d="M2 11Q7 15 12 11.6" fill="none" stroke="#a0a0a0" stroke-width="0.8"/></svg><svg style="position:absolute;left:83.4px;top:704.8px;" width="16" height="16" viewBox="0 0 16 16"><path d="M1 1.4H15L9.6 8V14.6L6.4 12.6V8Z" fill="#5f8dc6" stroke="#3f6ea8" stroke-width="0.8" stroke-linejoin="round"/><path d="M1.4 1.4H14.6" stroke="#f2d43a" stroke-width="1.8"/></svg><svg style="position:absolute;left:108.6px;top:704.8px;" width="16" height="16" viewBox="0 0 16 16"><text x="5" y="10.4" font-family="Liberation Serif" font-size="16" text-anchor="middle" fill="#c8c8c8">ε</text><path d="M8.4 9.4H14.6V15.4H12.4V12H10.6V15.4H8.4Z" fill="#dcdcdc"/></svg><svg style="position:absolute;left:146.0px;top:704.8px;" width="16" height="16" viewBox="0 0 16 16"><path d="M2 1.5V14M2 4.5H5M2 10.5H5" fill="none" stroke="#8a8a8a" stroke-width="1"/><rect x="4.2" y="3" width="3" height="3" fill="#fbe3c0" stroke="#e8901c" stroke-width="0.9"/><rect x="4.2" y="9" width="3" height="3" fill="#fbe3c0" stroke="#e8901c" stroke-width="0.9"/><path d="M11 15.4L15.4 10H12.8V1.4H9.2V10H6.6Z" fill="#4a7ab8" stroke="#2f5a96" stroke-width="0.6"/></svg><svg style="position:absolute;left:170.6px;top:704.8px;" width="16" height="16" viewBox="0 0 16 16"><path d="M2 1.5V14M2 4.5H5M2 10.5H5" fill="none" stroke="#8a8a8a" stroke-width="1"/><rect x="4.2" y="3" width="3" height="3" fill="#fbe3c0" stroke="#e8901c" stroke-width="0.9"/><rect x="4.2" y="9" width="3" height="3" fill="#fbe3c0" stroke="#e8901c" stroke-width="0.9"/><path d="M11 0.6L15.4 6H12.8V14.6H9.2V6H6.6Z" fill="#4a7ab8" stroke="#2f5a96" stroke-width="0.6"/></svg><svg style="position:absolute;left:194.8px;top:704.8px;" width="16" height="16" viewBox="0 0 16 16"><rect x="1" y="1" width="11.5" height="11.5" fill="#fbfbfb" stroke="#6a6a6a" stroke-width="1.1"/><rect x="9" y="10.4" width="6.6" height="4.4" rx="1.6" fill="#e8334a"/><path d="M10.6 12.6H14" stroke="#fff" stroke-width="1.2"/></svg><svg style="position:absolute;left:130px;top:711px;" width="8" height="5" viewBox="0 0 8 5"><path d="M0 0H8L4 4.6Z" fill="#cfcfcf"/></svg><svg style="position:absolute;left:1462.3px;top:200.8px;" width="16" height="16" viewBox="0 0 16 16"><circle cx="5.4" cy="5.4" r="3.1" fill="#d42a2a"/><rect x="4.6000000000000005" y="0.40000000000000036" width="1.6" height="5" transform="rotate(0.0 5.4 5.4)" fill="#d42a2a"/><rect x="4.6000000000000005" y="0.40000000000000036" width="1.6" height="5" transform="rotate(45.0 5.4 5.4)" fill="#d42a2a"/><rect x="4.6000000000000005" y="0.40000000000000036" width="1.6" height="5" transform="rotate(90.0 5.4 5.4)" fill="#d42a2a"/><rect x="4.6000000000000005" y="0.40000000000000036" width="1.6" height="5" transform="rotate(135.0 5.4 5.4)" fill="#d42a2a"/><rect x="4.6000000000000005" y="0.40000000000000036" width="1.6" height="5" transform="rotate(180.0 5.4 5.4)" fill="#d42a2a"/><rect x="4.6000000000000005" y="0.40000000000000036" width="1.6" height="5" transform="rotate(225.0 5.4 5.4)" fill="#d42a2a"/><rect x="4.6000000000000005" y="0.40000000000000036" width="1.6" height="5" transform="rotate(270.0 5.4 5.4)" fill="#d42a2a"/><rect x="4.6000000000000005" y="0.40000000000000036" width="1.6" height="5" transform="rotate(315.0 5.4 5.4)" fill="#d42a2a"/><circle cx="5.4" cy="5.4" r="1.3" fill="#efefef"/><circle cx="11.6" cy="9" r="2.232" fill="#6a6a6a"/><rect x="10.799999999999999" y="5.4" width="1.6" height="3.6" transform="rotate(0.0 11.6 9)" fill="#6a6a6a"/><rect x="10.799999999999999" y="5.4" width="1.6" height="3.6" transform="rotate(45.0 11.6 9)" fill="#6a6a6a"/><rect x="10.799999999999999" y="5.4" width="1.6" height="3.6" transform="rotate(90.0 11.6 9)" fill="#6a6a6a"/><rect x="10.799999999999999" y="5.4" width="1.6" height="3.6" transform="rotate(135.0 11.6 9)" fill="#6a6a6a"/><rect x="10.799999999999999" y="5.4" width="1.6" height="3.6" transform="rotate(180.0 11.6 9)" fill="#6a6a6a"/><rect x="10.799999999999999" y="5.4" width="1.6" height="3.6" transform="rotate(225.0 11.6 9)" fill="#6a6a6a"/><rect x="10.799999999999999" y="5.4" width="1.6" height="3.6" transform="rotate(270.0 11.6 9)" fill="#6a6a6a"/><rect x="10.799999999999999" y="5.4" width="1.6" height="3.6" transform="rotate(315.0 11.6 9)" fill="#6a6a6a"/><circle cx="11.6" cy="9" r="0.936" fill="#efefef"/><circle cx="7.6" cy="13" r="1.736" fill="#8db2e3"/><rect x="6.8" y="10.2" width="1.6" height="2.8" transform="rotate(0.0 7.6 13)" fill="#8db2e3"/><rect x="6.8" y="10.2" width="1.6" height="2.8" transform="rotate(45.0 7.6 13)" fill="#8db2e3"/><rect x="6.8" y="10.2" width="1.6" height="2.8" transform="rotate(90.0 7.6 13)" fill="#8db2e3"/><rect x="6.8" y="10.2" width="1.6" height="2.8" transform="rotate(135.0 7.6 13)" fill="#8db2e3"/><rect x="6.8" y="10.2" width="1.6" height="2.8" transform="rotate(180.0 7.6 13)" fill="#8db2e3"/><rect x="6.8" y="10.2" width="1.6" height="2.8" transform="rotate(225.0 7.6 13)" fill="#8db2e3"/><rect x="6.8" y="10.2" width="1.6" height="2.8" transform="rotate(270.0 7.6 13)" fill="#8db2e3"/><rect x="6.8" y="10.2" width="1.6" height="2.8" transform="rotate(315.0 7.6 13)" fill="#8db2e3"/><circle cx="7.6" cy="13" r="0.728" fill="#efefef"/><path d="M11.4 13.6H16L13.7 16Z" fill="#333"/></svg><svg style="position:absolute;left:1487.6px;top:200.8px;" width="16" height="16" viewBox="0 0 16 16"><g transform="scale(0.64)"><path d="M11 2C7.5 2 7.2 3.5 7.2 5V7.2H11.5V8H4.8C3 8 2 9.8 2 12C2 14.2 3 16 4.8 16H7V13.2C7 11.5 8.2 10.4 9.8 10.4H13.8C15.2 10.4 16 9.4 16 8.2V5C16 3.2 14.5 2 11 2Z" fill="#3c78b5"/><circle cx="9.2" cy="4.6" r="0.9" fill="#fff"/><path d="M12.5 22C16 22 16.3 20.5 16.3 19V16.8H12V16H18.7C20.5 16 21.5 14.2 21.5 12C21.5 9.8 20.5 8 18.7 8H16.5V10.8C16.5 12.5 15.3 13.6 13.7 13.6H9.7C8.3 13.6 7.5 14.6 7.5 15.8V19C7.5 20.8 9 22 12.5 22Z" fill="#f6c93e"/><circle cx="14.3" cy="19.4" r="0.9" fill="#fff"/></g><path d="M11.4 13.6H16L13.7 16Z" fill="#333"/></svg><svg style="position:absolute;left:1511.8px;top:200.8px;" width="16" height="16" viewBox="0 0 16 16"><circle cx="8" cy="8" r="7.2" fill="#f4f4f4" stroke="#7a7a7a" stroke-width="1.1"/><path d="M8 3.4V8L11 10.2" fill="none" stroke="#7a7a7a" stroke-width="1.1"/></svg><svg style="position:absolute;left:1536.8px;top:200.8px;" width="16" height="16" viewBox="0 0 16 16"><path d="M2.5 0.8H10L13.5 4.2V15.2H2.5Z" fill="#ececec" stroke="#a8a8a8" stroke-width="0.9" stroke-linejoin="round"/><path d="M4.4 6H11.6M4.4 8.4H11.6M4.4 10.8H11.6M4.4 13H11.6" stroke="#a8a8a8" stroke-width="1"/></svg><svg style="position:absolute;left:1568.9px;top:200.8px;" width="16" height="16" viewBox="0 0 16 16"><path d="M1.5 1.5H12.5V9L9 12.5H1.5Z" fill="#f6dc4a" stroke="#d8b72c" stroke-width="0.9"/><path d="M13.4 4L15.4 5.2L10.4 13.6L8 15.4L8.4 12.4Z" fill="#ecd98a" stroke="#a8924a" stroke-width="0.6"/></svg><svg style="position:absolute;left:1600.9px;top:200.8px;" width="16" height="16" viewBox="0 0 16 16"><circle cx="4.6" cy="4.2" r="3.5" fill="#f4f4f4" stroke="#6e6e6e" stroke-width="0.8"/><path d="M4.8 4.4L-0.6 3L2.4 -1.4Z" fill="#efefef"/><path d="M1.4 2.6L4 3.6L3.8 6.2M4.2 0.9L5 3L7.4 2.8" fill="none" stroke="#6e6e6e" stroke-width="0.7"/><path d="M6.8 6.4L8.8 8.4" stroke="#333" stroke-width="2.8"/><path d="M8.6 8.2L14.4 14.4" stroke="#7a6820" stroke-width="3.6" stroke-linecap="round"/><path d="M8.8 8.4L14.2 14.2" stroke="#ecd574" stroke-width="2.2" stroke-linecap="round"/></svg><div style="position:absolute;left:1561.5px;top:203px;width:1px;height:12px;background:#d2d2d2;"></div><div style="position:absolute;left:1593px;top:203px;width:1px;height:12px;background:#d2d2d2;"></div><svg style="position:absolute;left:1478.0px;top:255.60000000000002px;" width="16" height="16" viewBox="0 0 16 16"><circle cx="8" cy="8" r="7.2" fill="#f4f4f4" stroke="#7a7a7a" stroke-width="1.1"/><path d="M8 3.4V8L11 10.2" fill="none" stroke="#7a7a7a" stroke-width="1.1"/></svg><svg style="position:absolute;left:1478.0px;top:276.6px;" width="16" height="16" viewBox="0 0 16 16"><circle cx="7.4" cy="7.4" r="5.2" fill="none" stroke="#5fa83a" stroke-width="3"/><path d="M8 8L14.6 14.6" stroke="#f0e64a" stroke-width="3.2"/><path d="M9 9L14.2 14.2" stroke="#8bc34a" stroke-width="1.4"/><path d="M7 7H10.4L10.4 10.4" fill="none" stroke="#3b7a22" stroke-width="0"/></svg><svg style="position:absolute;left:1497.7px;top:297.6px;" width="16" height="16" viewBox="0 0 16 16"><g><rect x="7.1" y="0.6" width="1.8" height="7" rx="0.9" transform="rotate(0 8 8)" fill="#7fa8dc" stroke="#5b8dc9" stroke-width="0.4"/><rect x="7.1" y="0.6" width="1.8" height="7" rx="0.9" transform="rotate(45 8 8)" fill="#7fa8dc" stroke="#5b8dc9" stroke-width="0.4"/><rect x="7.1" y="0.6" width="1.8" height="7" rx="0.9" transform="rotate(90 8 8)" fill="#7fa8dc" stroke="#5b8dc9" stroke-width="0.4"/><rect x="7.1" y="0.6" width="1.8" height="7" rx="0.9" transform="rotate(135 8 8)" fill="#7fa8dc" stroke="#5b8dc9" stroke-width="0.4"/><rect x="7.1" y="0.6" width="1.8" height="7" rx="0.9" transform="rotate(180 8 8)" fill="#7fa8dc" stroke="#5b8dc9" stroke-width="0.4"/><rect x="7.1" y="0.6" width="1.8" height="7" rx="0.9" transform="rotate(225 8 8)" fill="#7fa8dc" stroke="#5b8dc9" stroke-width="0.4"/><rect x="7.1" y="0.6" width="1.8" height="7" rx="0.9" transform="rotate(270 8 8)" fill="#7fa8dc" stroke="#5b8dc9" stroke-width="0.4"/><rect x="7.1" y="0.6" width="1.8" height="7" rx="0.9" transform="rotate(315 8 8)" fill="#7fa8dc" stroke="#5b8dc9" stroke-width="0.4"/><circle cx="8" cy="8" r="4.2" fill="#8db2e3" stroke="#5b8dc9" stroke-width="0.5"/><circle cx="8" cy="8" r="1.7" fill="#fff" stroke="#5b8dc9" stroke-width="0.5"/></g></svg><svg style="position:absolute;left:1497.7px;top:318.6px;" width="16" height="16" viewBox="0 0 16 16"><g><rect x="7.1" y="0.6" width="1.8" height="7" rx="0.9" transform="rotate(0 8 8)" fill="#7fa8dc" stroke="#5b8dc9" stroke-width="0.4"/><rect x="7.1" y="0.6" width="1.8" height="7" rx="0.9" transform="rotate(45 8 8)" fill="#7fa8dc" stroke="#5b8dc9" stroke-width="0.4"/><rect x="7.1" y="0.6" width="1.8" height="7" rx="0.9" transform="rotate(90 8 8)" fill="#7fa8dc" stroke="#5b8dc9" stroke-width="0.4"/><rect x="7.1" y="0.6" width="1.8" height="7" rx="0.9" transform="rotate(135 8 8)" fill="#7fa8dc" stroke="#5b8dc9" stroke-width="0.4"/><rect x="7.1" y="0.6" width="1.8" height="7" rx="0.9" transform="rotate(180 8 8)" fill="#7fa8dc" stroke="#5b8dc9" stroke-width="0.4"/><rect x="7.1" y="0.6" width="1.8" height="7" rx="0.9" transform="rotate(225 8 8)" fill="#7fa8dc" stroke="#5b8dc9" stroke-width="0.4"/><rect x="7.1" y="0.6" width="1.8" height="7" rx="0.9" transform="rotate(270 8 8)" fill="#7fa8dc" stroke="#5b8dc9" stroke-width="0.4"/><rect x="7.1" y="0.6" width="1.8" height="7" rx="0.9" transform="rotate(315 8 8)" fill="#7fa8dc" stroke="#5b8dc9" stroke-width="0.4"/><circle cx="8" cy="8" r="4.2" fill="#8db2e3" stroke="#5b8dc9" stroke-width="0.5"/><circle cx="8" cy="8" r="1.7" fill="#fff" stroke="#5b8dc9" stroke-width="0.5"/></g></svg><svg style="position:absolute;left:1497.7px;top:339.6px;" width="16" height="16" viewBox="0 0 16 16"><g><rect x="7.1" y="0.6" width="1.8" height="7" rx="0.9" transform="rotate(0 8 8)" fill="#7fa8dc" stroke="#5b8dc9" stroke-width="0.4"/><rect x="7.1" y="0.6" width="1.8" height="7" rx="0.9" transform="rotate(45 8 8)" fill="#7fa8dc" stroke="#5b8dc9" stroke-width="0.4"/><rect x="7.1" y="0.6" width="1.8" height="7" rx="0.9" transform="rotate(90 8 8)" fill="#7fa8dc" stroke="#5b8dc9" stroke-width="0.4"/><rect x="7.1" y="0.6" width="1.8" height="7" rx="0.9" transform="rotate(135 8 8)" fill="#7fa8dc" stroke="#5b8dc9" stroke-width="0.4"/><rect x="7.1" y="0.6" width="1.8" height="7" rx="0.9" transform="rotate(180 8 8)" fill="#7fa8dc" stroke="#5b8dc9" stroke-width="0.4"/><rect x="7.1" y="0.6" width="1.8" height="7" rx="0.9" transform="rotate(225 8 8)" fill="#7fa8dc" stroke="#5b8dc9" stroke-width="0.4"/><rect x="7.1" y="0.6" width="1.8" height="7" rx="0.9" transform="rotate(270 8 8)" fill="#7fa8dc" stroke="#5b8dc9" stroke-width="0.4"/><rect x="7.1" y="0.6" width="1.8" height="7" rx="0.9" transform="rotate(315 8 8)" fill="#7fa8dc" stroke="#5b8dc9" stroke-width="0.4"/><circle cx="8" cy="8" r="4.2" fill="#8db2e3" stroke="#5b8dc9" stroke-width="0.5"/><circle cx="8" cy="8" r="1.7" fill="#fff" stroke="#5b8dc9" stroke-width="0.5"/></g></svg><svg style="position:absolute;left:1478.0px;top:360.6px;" width="16" height="16" viewBox="0 0 16 16"><circle cx="7.4" cy="7.4" r="5.2" fill="none" stroke="#5fa83a" stroke-width="3"/><path d="M8 8L14.6 14.6" stroke="#f0e64a" stroke-width="3.2"/><path d="M9 9L14.2 14.2" stroke="#8bc34a" stroke-width="1.4"/><path d="M7 7H10.4L10.4 10.4" fill="none" stroke="#3b7a22" stroke-width="0"/></svg><svg style="position:absolute;left:1497.7px;top:381.6px;" width="16" height="16" viewBox="0 0 16 16"><path d="M12.2 4.6V2.2H3.6L8.4 8L3.6 13.8H12.4V11.2" fill="none" stroke="#7fa9d8" stroke-width="1.1" stroke-linejoin="miter"/></svg><svg style="position:absolute;left:1497.7px;top:402.6px;" width="16" height="16" viewBox="0 0 16 16"><g><rect x="7.1" y="0.6" width="1.8" height="7" rx="0.9" transform="rotate(0 8 8)" fill="#7fa8dc" stroke="#5b8dc9" stroke-width="0.4"/><rect x="7.1" y="0.6" width="1.8" height="7" rx="0.9" transform="rotate(45 8 8)" fill="#7fa8dc" stroke="#5b8dc9" stroke-width="0.4"/><rect x="7.1" y="0.6" width="1.8" height="7" rx="0.9" transform="rotate(90 8 8)" fill="#7fa8dc" stroke="#5b8dc9" stroke-width="0.4"/><rect x="7.1" y="0.6" width="1.8" height="7" rx="0.9" transform="rotate(135 8 8)" fill="#7fa8dc" stroke="#5b8dc9" stroke-width="0.4"/><rect x="7.1" y="0.6" width="1.8" height="7" rx="0.9" transform="rotate(180 8 8)" fill="#7fa8dc" stroke="#5b8dc9" stroke-width="0.4"/><rect x="7.1" y="0.6" width="1.8" height="7" rx="0.9" transform="rotate(225 8 8)" fill="#7fa8dc" stroke="#5b8dc9" stroke-width="0.4"/><rect x="7.1" y="0.6" width="1.8" height="7" rx="0.9" transform="rotate(270 8 8)" fill="#7fa8dc" stroke="#5b8dc9" stroke-width="0.4"/><rect x="7.1" y="0.6" width="1.8" height="7" rx="0.9" transform="rotate(315 8 8)" fill="#7fa8dc" stroke="#5b8dc9" stroke-width="0.4"/><circle cx="8" cy="8" r="4.2" fill="#8db2e3" stroke="#5b8dc9" stroke-width="0.5"/><circle cx="8" cy="8" r="1.7" fill="#fff" stroke="#5b8dc9" stroke-width="0.5"/></g></svg><svg style="position:absolute;left:1497.7px;top:423.6px;" width="16" height="16" viewBox="0 0 16 16"><g><rect x="7.1" y="0.6" width="1.8" height="7" rx="0.9" transform="rotate(0 8 8)" fill="#7fa8dc" stroke="#5b8dc9" stroke-width="0.4"/><rect x="7.1" y="0.6" width="1.8" height="7" rx="0.9" transform="rotate(45 8 8)" fill="#7fa8dc" stroke="#5b8dc9" stroke-width="0.4"/><rect x="7.1" y="0.6" width="1.8" height="7" rx="0.9" transform="rotate(90 8 8)" fill="#7fa8dc" stroke="#5b8dc9" stroke-width="0.4"/><rect x="7.1" y="0.6" width="1.8" height="7" rx="0.9" transform="rotate(135 8 8)" fill="#7fa8dc" stroke="#5b8dc9" stroke-width="0.4"/><rect x="7.1" y="0.6" width="1.8" height="7" rx="0.9" transform="rotate(180 8 8)" fill="#7fa8dc" stroke="#5b8dc9" stroke-width="0.4"/><rect x="7.1" y="0.6" width="1.8" height="7" rx="0.9" transform="rotate(225 8 8)" fill="#7fa8dc" stroke="#5b8dc9" stroke-width="0.4"/><rect x="7.1" y="0.6" width="1.8" height="7" rx="0.9" transform="rotate(270 8 8)" fill="#7fa8dc" stroke="#5b8dc9" stroke-width="0.4"/><rect x="7.1" y="0.6" width="1.8" height="7" rx="0.9" transform="rotate(315 8 8)" fill="#7fa8dc" stroke="#5b8dc9" stroke-width="0.4"/><circle cx="8" cy="8" r="4.2" fill="#8db2e3" stroke="#5b8dc9" stroke-width="0.5"/><circle cx="8" cy="8" r="1.7" fill="#fff" stroke="#5b8dc9" stroke-width="0.5"/></g></svg><div style="position:absolute;left:296px;top:662px;width:3px;height:17px;background-image:radial-gradient(circle,#b4b4b4 0.6px,transparent 0.9px);background-size:3px 3px;"></div><div style="position:absolute;left:1449.5px;top:662px;width:3px;height:17px;background-image:radial-gradient(circle,#b4b4b4 0.6px,transparent 0.9px);background-size:3px 3px;"></div><div style="position:absolute;left:4px;top:1170px;width:318px;height:26px;background:#fff;border:1px solid #b4b4b4;border-radius:3px;"></div><svg style="position:absolute;left:12px;top:1176.5px;" width="14" height="14" viewBox="0 0 14 14"><circle cx="5.5" cy="5.5" r="4.2" fill="none" stroke="#8e8e8e" stroke-width="1.1"/><path d="M8.7 8.7 L13 13" stroke="#8e8e8e" stroke-width="1.3"/></svg><div style="position:absolute;left:33px;top:1174.30px;line-height:20px;height:20px;white-space:pre;font-size:15px;color:#8a8a8a;letter-spacing:-0.177px;">Zu suchender Typ (Strg+K)</div><div style="position:absolute;left:330px;top:1174.70px;line-height:20px;height:20px;white-space:pre;font-size:13px;color:#000;transform-origin:0 0;transform:scaleX(0.9108);">Eintrag der Legende gelöscht.</div><div style="position:absolute;left:951.2px;top:1174.70px;line-height:20px;height:20px;white-space:pre;font-size:13px;color:#000;transform-origin:0 0;transform:scaleX(0.9175);">Koordinate</div><div style="position:absolute;left:1014px;top:1171px;width:112px;height:25px;background:#fff;border:1px solid #b4b4b4;border-radius:3px;"></div><div style="position:absolute;left:1025.8px;top:1174.70px;line-height:20px;height:20px;white-space:pre;font-size:13px;color:#000;transform-origin:0 0;transform:scaleX(0.8328);">2525211,1311519</div><div style="position:absolute;left:1159.5px;top:1174.70px;line-height:20px;height:20px;white-space:pre;font-size:13px;color:#000;transform-origin:0 0;transform:scaleX(0.8996);">Maßstab</div><div style="position:absolute;left:1209px;top:1171px;width:100px;height:25px;background:#fff;border:1px solid #b4b4b4;border-radius:3px;"></div><div style="position:absolute;left:1289px;top:1173px;width:1px;height:22px;background:#c8c8c8;"></div><div style="position:absolute;left:1213.6px;top:1174.70px;line-height:20px;height:20px;white-space:pre;font-size:13px;color:#000;transform-origin:0 0;transform:scaleX(0.8099);">1:1101778</div><svg style="position:absolute;left:1294.3px;top:1181.5px;" width="8" height="6" viewBox="0 0 8 6"><path d="M0 0.5 L8 0.5 L4 5z" fill="#444"/></svg><div style="position:absolute;left:1343.3px;top:1174.70px;line-height:20px;height:20px;white-space:pre;font-size:13px;color:#000;transform-origin:0 0;transform:scaleX(0.9308);">Vergrößerung</div><div style="position:absolute;left:1421px;top:1171px;width:95px;height:25px;background:#fff;border:1px solid #b4b4b4;border-radius:3px;"></div><div style="position:absolute;left:1426px;top:1174.70px;line-height:20px;height:20px;white-space:pre;font-size:13px;color:#000;transform-origin:0 0;transform:scaleX(0.9023);">100%</div><div style="position:absolute;left:1499px;top:1173px;width:1px;height:22px;background:#d4d4d4;"></div><svg style="position:absolute;left:1504.5px;top:1176.5px;" width="7" height="4" viewBox="0 0 7 4"><path d="M0 4 L3.5 0 L7 4z" fill="#555"/></svg><svg style="position:absolute;left:1504.5px;top:1186.5px;" width="7" height="4" viewBox="0 0 7 4"><path d="M0 0 L3.5 4 L7 0z" fill="#555"/></svg><div style="position:absolute;left:1525.5px;top:1174.70px;line-height:20px;height:20px;white-space:pre;font-size:13px;color:#000;transform-origin:0 0;transform:scaleX(0.9203);">Drehung</div><div style="position:absolute;left:1581px;top:1171px;width:95px;height:25px;background:#fff;border:1px solid #b4b4b4;border-radius:3px;"></div><div style="position:absolute;left:1586px;top:1174.70px;line-height:20px;height:20px;white-space:pre;font-size:13px;color:#000;transform-origin:0 0;transform:scaleX(0.9185);">0,0 °</div><div style="position:absolute;left:1659px;top:1173px;width:1px;height:22px;background:#d4d4d4;"></div><svg style="position:absolute;left:1664.5px;top:1176.5px;" width="7" height="4" viewBox="0 0 7 4"><path d="M0 4 L3.5 0 L7 4z" fill="#555"/></svg><svg style="position:absolute;left:1664.5px;top:1186.5px;" width="7" height="4" viewBox="0 0 7 4"><path d="M0 0 L3.5 4 L7 0z" fill="#555"/></svg><div class="cb" style="left:1682px;top:1177px;"></div><svg style="position:absolute;left:1684px;top:1179px;" width="10" height="10" viewBox="0 0 10 10"><path d="M1.2 5.2 L3.8 8.5 L8.8 1.2" fill="none" stroke="#111" stroke-width="1.7"/></svg><div style="position:absolute;left:1701px;top:1174.70px;line-height:20px;height:20px;white-space:pre;font-size:13px;color:#000;transform-origin:0 0;transform:scaleX(0.9087);">Zeichnen</div><div style="position:absolute;left:1784.3px;top:1174.70px;line-height:20px;height:20px;white-space:pre;font-size:13px;color:#000;transform-origin:0 0;transform:scaleX(0.8623);">EPSG:2056</div><svg style="position:absolute;left:1128px;top:1175px;" width="18" height="18" viewBox="0 0 18 18"><ellipse cx="8" cy="8.5" rx="4.6" ry="6.4" transform="rotate(-28 8 8.5)" fill="#f2f2f2" stroke="#333" stroke-width="1.3"/><path d="M3.4 4.4L12 9.4M6.6 2.6L9.6 7.8" stroke="#333" stroke-width="1.1"/><circle cx="11.2" cy="13" r="2.4" fill="#e6e6e6" stroke="#333" stroke-width="1"/><path d="M13 3L16 1M14 6L17 5.4" stroke="#555" stroke-width="0.9"/></svg><svg style="position:absolute;left:1321px;top:1176px;" width="13" height="15" viewBox="0 0 13 15"><path d="M3 7V4.6A3.5 3.5 0 0 1 10 4.6V7" fill="none" stroke="#8a8a8a" stroke-width="1.6"/><rect x="0.8" y="6.6" width="11.4" height="8" rx="1.2" fill="#6e6e6e"/></svg><svg style="position:absolute;left:1766px;top:1177px;" width="15" height="14" viewBox="0 0 15 14"><g fill="none" stroke="#7e7e7e" stroke-width="0.9"><path d="M7.5 0.6L14.4 6.6L7.5 13.4L0.6 6.6Z"/><ellipse cx="7.5" cy="7" rx="5.4" ry="5.8"/><path d="M2.2 5H12.8M1.6 8.6H13.4M7.5 1V13M4.6 2.4Q3 7 4.6 11.8M10.4 2.4Q12 7 10.4 11.8"/></g></svg><svg style="position:absolute;left:1866px;top:1176.5px;" width="18" height="17" viewBox="0 0 16 15"><path d="M8 0.6C12.2 0.6 15.4 3 15.4 6.2C15.4 9.4 12.2 11.8 8 11.8C7.6 11.8 7.2 11.8 6.8 11.7L9.6 14.4H6.4L4.6 11.2C2.2 10.2 0.6 8.4 0.6 6.2C0.6 3 3.8 0.6 8 0.6Z" fill="#5a5a5a" transform="translate(16 0) scale(-1 1)"/><circle cx="4.6" cy="6.2" r="1.1" fill="#fff"/><circle cx="8" cy="6.2" r="1.1" fill="#fff"/><circle cx="11.4" cy="6.2" r="1.1" fill="#fff"/></svg><svg style="position:absolute;left:1896px;top:1171px;" width="22" height="23" viewBox="0 0 22 23"><path d="M1.6 8H6.2C5 5.6 6.4 4 8 4C9.6 4 11 5.6 9.8 8H14.4V12.4C16.8 11.2 18.4 12.6 18.4 14.2C18.4 15.8 16.8 17.2 14.4 16V21.4H1.6V16.6C4 17.8 5.4 16.2 5.4 14.6C5.4 13 4 11.6 1.6 12.8Z" fill="#9a9a9a" stroke="#6e6e6e" stroke-width="0.9" stroke-linejoin="round"/><path d="M16.6 0.8L17.9 4.1L21.4 4.3L18.7 6.5L19.6 9.9L16.6 8L13.6 9.9L14.5 6.5L11.8 4.3L15.3 4.1Z" fill="#fff" stroke="#9a9a9a" stroke-width="0.8" stroke-linejoin="round"/></svg><div style="position:absolute;left:414px;top:160px;width:1032px;height:829px;background:#efefef;border-radius:4px 4px 0 0;box-shadow:0 0 9px rgba(0,0,0,0.22),0 3px 13px 1px rgba(0,0,0,0.34),0 7px 18px rgba(0,0,0,0.16);"></div><div style="position:absolute;left:414px;top:160px;width:1032px;height:32px;background:#383838;border-radius:4px 4px 0 0;"></div><div style="position:absolute;left:737px;top:165.50px;line-height:20px;height:20px;white-space:pre;font-size:15px;color:#d9dde2;font-weight:700;letter-spacing:-0.361px;">Attribute Nach Position Verknüpfen (Zusammenfassung)</div><svg style="position:absolute;left:1425px;top:171px;" width="10" height="10" viewBox="0 0 10 10"><path d="M1.5 1.5 L8.5 8.5 M8.5 1.5 L1.5 8.5" stroke="#d8d8d8" stroke-width="1.9" fill="none"/></svg><div style="position:absolute;left:425px;top:232px;width:738px;height:656px;background:#efefef;border:1px solid #b9b9b9;"></div><div style="position:absolute;left:519px;top:205px;width:87px;height:28px;background:#e6e6e6;border:1px solid #bdbdbd;border-radius:3px 3px 0 0;"></div><div style="position:absolute;left:425px;top:203px;width:95px;height:31px;background:linear-gradient(#fdfdfd,#efefef);border:1px solid #b9b9b9;border-bottom:none;border-radius:3px 3px 0 0;"></div><div style="position:absolute;left:436.9px;top:209.10px;line-height:20px;height:20px;white-space:pre;font-size:15px;color:#000;letter-spacing:-0.039px;">Parameter</div><div style="position:absolute;left:531.9px;top:209.80px;line-height:20px;height:20px;white-space:pre;font-size:15px;color:#000;letter-spacing:0.311px;">Protokoll</div><div style="position:absolute;left:431.5px;top:237.50px;line-height:20px;height:20px;white-space:pre;font-size:15px;color:#000;letter-spacing:-0.188px;">Eingabelayer</div><div class="btn" style="left:431px;top:263px;width:619px;height:27px;"></div><div style="position:absolute;left:456.3px;top:267.40px;line-height:20px;height:20px;white-space:pre;font-size:15px;color:#000;letter-spacing:-0.127px;">Extrahiert (Position) [EPSG:4326]</div><svg style="position:absolute;left:1034.3px;top:273.5px;" width="8" height="6" viewBox="0 0 8 6"><path d="M0 0.5 L8 0.5 L4 5z" fill="#444"/></svg><div class="btn" style="left:1128px;top:263px;width:29px;height:26px;"></div><div style="position:absolute;left:1136.0px;top:280px;width:2.2px;height:2.2px;background:#1a1a1a;border-radius:1.1px;"></div><div style="position:absolute;left:1141.4px;top:280px;width:2.2px;height:2.2px;background:#1a1a1a;border-radius:1.1px;"></div><div style="position:absolute;left:1146.8px;top:280px;width:2.2px;height:2.2px;background:#1a1a1a;border-radius:1.1px;"></div><svg style="position:absolute;left:1149.5px;top:282.4px;" width="5" height="3.4" viewBox="0 0 5 3.4"><path d="M0 0 L5 0 L2.5 3.2z" fill="#555"/></svg><div class="cb" style="left:431px;top:301.2px;border-color:#c4c4c4;background:#f4f4f4"></div><div style="position:absolute;left:450.4px;top:299.10px;line-height:20px;height:20px;white-space:pre;font-size:15px;color:#b4b4b4;letter-spacing:-0.006px;">Nur gewählte Symbole</div><div style="position:absolute;left:431.5px;top:326.80px;line-height:20px;height:20px;white-space:pre;font-size:15px;color:#000;letter-spacing:-0.155px;">Layer verknüpfen</div><div class="btn" style="left:431px;top:352px;width:619px;height:27px;"></div><div style="position:absolute;left:456.3px;top:356.40px;line-height:20px;height:20px;white-space:pre;font-size:15px;color:#000;letter-spacing:-0.155px;">kantonsgrenzen K4kant19970101gf_ch2007Poly [EPSG:2056]</div><svg style="position:absolute;left:1034.3px;top:362.5px;" width="8" height="6" viewBox="0 0 8 6"><path d="M0 0.5 L8 0.5 L4 5z" fill="#444"/></svg><div class="btn" style="left:1128px;top:352px;width:29px;height:26px;"></div><div style="position:absolute;left:1136.0px;top:369px;width:2.2px;height:2.2px;background:#1a1a1a;border-radius:1.1px;"></div><div style="position:absolute;left:1141.4px;top:369px;width:2.2px;height:2.2px;background:#1a1a1a;border-radius:1.1px;"></div><div style="position:absolute;left:1146.8px;top:369px;width:2.2px;height:2.2px;background:#1a1a1a;border-radius:1.1px;"></div><svg style="position:absolute;left:1149.5px;top:371.4px;" width="5" height="3.4" viewBox="0 0 5 3.4"><path d="M0 0 L5 0 L2.5 3.2z" fill="#555"/></svg><div class="cb" style="left:431px;top:390.3px;border-color:#c4c4c4;background:#f4f4f4"></div><div style="position:absolute;left:450.4px;top:388.20px;line-height:20px;height:20px;white-space:pre;font-size:15px;color:#b4b4b4;letter-spacing:-0.006px;">Nur gewählte Symbole</div><div style="position:absolute;left:431.5px;top:415.80px;line-height:20px;height:20px;white-space:pre;font-size:15px;color:#000;letter-spacing:-0.106px;">Geometrisches Prädikat</div><div class="cb" style="left:431px;top:445.5px;border-color:#b0b0b0;background:#fff"></div><svg style="position:absolute;left:433px;top:447.5px;" width="10" height="10" viewBox="0 0 10 10"><path d="M1 5 L3.9 8.8 L9 1" fill="none" stroke="#0a0a0a" stroke-width="2"/></svg><div style="position:absolute;left:450.4px;top:443.60px;line-height:20px;height:20px;white-space:pre;font-size:15px;color:#000;letter-spacing:-0.030px;">schneidet sich mit</div><div class="cb" style="left:583px;top:445.5px;border-color:#b0b0b0;background:#fff"></div><div style="position:absolute;left:602px;top:443.60px;line-height:20px;height:20px;white-space:pre;font-size:15px;color:#000;letter-spacing:0.228px;">überlappt</div><div class="cb" style="left:431px;top:476.5px;border-color:#b0b0b0;background:#fff"></div><div style="position:absolute;left:450.4px;top:474.60px;line-height:20px;height:20px;white-space:pre;font-size:15px;color:#000;letter-spacing:0.254px;">enthält</div><div class="cb" style="left:583px;top:476.5px;border-color:#b0b0b0;background:#fff"></div><div style="position:absolute;left:602px;top:474.60px;line-height:20px;height:20px;white-space:pre;font-size:15px;color:#000;letter-spacing:0.151px;">innerhalb</div><div class="cb" style="left:431px;top:507.5px;border-color:#b0b0b0;background:#fff"></div><div style="position:absolute;left:450.4px;top:505.60px;line-height:20px;height:20px;white-space:pre;font-size:15px;color:#000;letter-spacing:0.195px;">entspricht</div><div class="cb" style="left:583px;top:507.5px;border-color:#b0b0b0;background:#fff"></div><div style="position:absolute;left:602px;top:505.60px;line-height:20px;height:20px;white-space:pre;font-size:15px;color:#000;letter-spacing:0.135px;">kreuzt</div><div class="cb" style="left:431px;top:538.5px;border-color:#b0b0b0;background:#fff"></div><div style="position:absolute;left:450.4px;top:536.60px;line-height:20px;height:20px;white-space:pre;font-size:15px;color:#000;letter-spacing:0.303px;">berührt</div><div style="position:absolute;left:431.5px;top:565.20px;line-height:20px;height:20px;white-space:pre;font-size:15px;color:#000;letter-spacing:-0.054px;">Zusammenzufassende Felder (für alle Felder leer lassen) [optional]</div><div style="position:absolute;left:431px;top:590px;width:691px;height:27px;background:#efefef;border:1px solid #b6b6b6;border-radius:3px;"></div><div style="position:absolute;left:434.5px;top:593.60px;line-height:20px;height:20px;white-space:pre;font-size:15px;color:#b4b4b4;letter-spacing:0.105px;">0 Optionen gewählt</div><div class="btn" style="left:1128px;top:590px;width:29px;height:26px;"></div><div style="position:absolute;left:1138.5px;top:607px;width:2.2px;height:2.2px;background:#1a1a1a;border-radius:1.1px;"></div><div style="position:absolute;left:1143.9px;top:607px;width:2.2px;height:2.2px;background:#1a1a1a;border-radius:1.1px;"></div><div style="position:absolute;left:1149.3px;top:607px;width:2.2px;height:2.2px;background:#1a1a1a;border-radius:1.1px;"></div><div style="position:absolute;left:431.5px;top:622.80px;line-height:20px;height:20px;white-space:pre;font-size:15px;color:#000;letter-spacing:-0.032px;">Zu berechnende Zusammenfassungen (für alle verfügbaren leer lassen) [optional]</div><div style="position:absolute;left:431px;top:648px;width:691px;height:27px;background:#efefef;border:1px solid #b6b6b6;border-radius:3px;"></div><div style="position:absolute;left:434.5px;top:651.60px;line-height:20px;height:20px;white-space:pre;font-size:15px;color:#b4b4b4;letter-spacing:0.105px;">0 Optionen gewählt</div><div class="btn" style="left:1128px;top:648px;width:29px;height:26px;"></div><div style="position:absolute;left:1138.5px;top:665px;width:2.2px;height:2.2px;background:#1a1a1a;border-radius:1.1px;"></div><div style="position:absolute;left:1143.9px;top:665px;width:2.2px;height:2.2px;background:#1a1a1a;border-radius:1.1px;"></div><div style="position:absolute;left:1149.3px;top:665px;width:2.2px;height:2.2px;background:#1a1a1a;border-radius:1.1px;"></div><div class="cb" style="left:431px;top:686.4px;border-color:#b0b0b0;background:#fff"></div><div style="position:absolute;left:450.4px;top:683.50px;line-height:20px;height:20px;white-space:pre;font-size:15px;color:#000;letter-spacing:0.007px;">Alle Datensätze verwerfen, die nicht verknüpft werden konnten</div><div style="position:absolute;left:431.5px;top:711.80px;line-height:20px;height:20px;white-space:pre;font-size:15px;color:#000;letter-spacing:-0.121px;">Zusammengefasster Layer</div><div style="position:absolute;left:431px;top:737px;width:691px;height:27px;background:#fff;border:1px solid #b6b6b6;border-radius:3px;"></div><div style="position:absolute;left:434.5px;top:740.60px;line-height:20px;height:20px;white-space:pre;font-size:15px;color:#8e8e8e;letter-spacing:0.059px;">[Temporärlayer erzeugen]</div><div class="btn" style="left:1128px;top:737px;width:29px;height:26px;"></div><div style="position:absolute;left:1136.0px;top:754px;width:2.2px;height:2.2px;background:#1a1a1a;border-radius:1.1px;"></div><div style="position:absolute;left:1141.4px;top:754px;width:2.2px;height:2.2px;background:#1a1a1a;border-radius:1.1px;"></div><div style="position:absolute;left:1146.8px;top:754px;width:2.2px;height:2.2px;background:#1a1a1a;border-radius:1.1px;"></div><svg style="position:absolute;left:1149.5px;top:756.4px;" width="5" height="3.4" viewBox="0 0 5 3.4"><path d="M0 0 L5 0 L2.5 3.2z" fill="#555"/></svg><div class="cb" style="left:431px;top:775.5px;border-color:#b0b0b0;background:#fff"></div><svg style="position:absolute;left:433px;top:777.5px;" width="10" height="10" viewBox="0 0 10 10"><path d="M1 5 L3.9 8.8 L9 1" fill="none" stroke="#0a0a0a" stroke-width="2"/></svg><div style="position:absolute;left:450.4px;top:772.60px;line-height:20px;height:20px;white-space:pre;font-size:15px;color:#000;letter-spacing:0.006px;">Öffne Ausgabedatei nach erfolgreicher Ausführung</div><svg style="position:absolute;left:1166px;top:205px;" width="6" height="8" viewBox="0 0 6 8"><path d="M5.5 0 L0.5 4 L5.5 8z" fill="#333"/></svg><div style="position:absolute;left:1170px;top:538px;width:3px;height:17px;background-image:radial-gradient(circle,#b4b4b4 0.6px,transparent 0.9px);background-size:3px 3px;"></div><div style="position:absolute;left:1179px;top:203px;width:256px;height:685px;background:#fff;border:1px solid #b9b9b9;"></div><div style="position:absolute;left:1184.2px;top:211.58px;line-height:20px;height:20px;white-space:pre;font-size:22px;color:#4d4d4d;font-weight:700;transform-origin:0 0;transform:scaleX(0.9537);">Attribute nach Position</div><div style="position:absolute;left:1184.2px;top:237.78px;line-height:20px;height:20px;white-space:pre;font-size:22px;color:#4d4d4d;font-weight:700;transform-origin:0 0;transform:scaleX(0.9596);">verknüpfen</div><div style="position:absolute;left:1184.2px;top:263.98px;line-height:20px;height:20px;white-space:pre;font-size:22px;color:#4d4d4d;font-weight:700;transform-origin:0 0;transform:scaleX(0.9565);">(Zusammenfassung)</div><div style="position:absolute;left:1184.2px;top:298.60px;line-height:20px;height:20px;white-space:pre;font-size:15px;color:#555;letter-spacing:0.098px;">Dieser Algorithmus erwartet einen</div><div style="position:absolute;left:1184.2px;top:316.60px;line-height:20px;height:20px;white-space:pre;font-size:15px;color:#555;letter-spacing:-0.069px;">Vektorlayer und erzeugt einen neuen</div><div style="position:absolute;left:1184.2px;top:334.60px;line-height:20px;height:20px;white-space:pre;font-size:15px;color:#555;letter-spacing:0.064px;">Vektorlayer, der eine erweiterte</div><div style="position:absolute;left:1184.2px;top:352.60px;line-height:20px;height:20px;white-space:pre;font-size:15px;color:#555;letter-spacing:-0.090px;">Version der Eingabe mit zusätzlichen</div><div style="position:absolute;left:1184.2px;top:370.60px;line-height:20px;height:20px;white-space:pre;font-size:15px;color:#555;letter-spacing:0.227px;">Attributen in der Attributtabelle ist.</div><div style="position:absolute;left:1184.2px;top:401.60px;line-height:20px;height:20px;white-space:pre;font-size:15px;color:#555;letter-spacing:0.029px;">Die zusätzlichen Attribute und ihre</div><div style="position:absolute;left:1184.2px;top:419.60px;line-height:20px;height:20px;white-space:pre;font-size:15px;color:#555;letter-spacing:-0.024px;">Werte werden aus einem zweiten</div><div style="position:absolute;left:1184.2px;top:437.60px;line-height:20px;height:20px;white-space:pre;font-size:15px;color:#555;letter-spacing:-0.116px;">Layer entnommen. Eine räumliches</div><div style="position:absolute;left:1184.2px;top:455.60px;line-height:20px;height:20px;white-space:pre;font-size:15px;color:#555;letter-spacing:0.149px;">Kriterium wird verwendet um Werte</div><div style="position:absolute;left:1184.2px;top:473.60px;line-height:20px;height:20px;white-space:pre;font-size:15px;color:#555;letter-spacing:-0.175px;">aus dem zweiten Layer auszuwählen,</div><div style="position:absolute;left:1184.2px;top:491.60px;line-height:20px;height:20px;white-space:pre;font-size:15px;color:#555;letter-spacing:-0.152px;">die zu jedem Objekt des ersten</div><div style="position:absolute;left:1184.2px;top:509.60px;line-height:20px;height:20px;white-space:pre;font-size:15px;color:#555;letter-spacing:-0.068px;">Layers im Ergebnislayer hinzugefügt</div><div style="position:absolute;left:1184.2px;top:527.60px;line-height:20px;height:20px;white-space:pre;font-size:15px;color:#555;letter-spacing:-0.088px;">werden.</div><div style="position:absolute;left:1184.2px;top:558.60px;line-height:20px;height:20px;white-space:pre;font-size:15px;color:#555;letter-spacing:0.023px;">Der Algorithmus berechnet eine</div><div style="position:absolute;left:1184.2px;top:576.60px;line-height:20px;height:20px;white-space:pre;font-size:15px;color:#555;letter-spacing:0.038px;">statistische Zusammenfassung für</div><div style="position:absolute;left:1184.2px;top:594.60px;line-height:20px;height:20px;white-space:pre;font-size:15px;color:#555;letter-spacing:-0.135px;">die Werte aus passenden Objekten</div><div style="position:absolute;left:1184.2px;top:612.60px;line-height:20px;height:20px;white-space:pre;font-size:15px;color:#555;letter-spacing:-0.302px;">des zweiten Layers (z.B.</div><div style="position:absolute;left:1184.2px;top:630.60px;line-height:20px;height:20px;white-space:pre;font-size:15px;color:#555;letter-spacing:0.190px;">Maximalwert, Mittelwert etc.).</div><div style="position:absolute;left:425px;top:918px;width:924px;height:27px;background:#fff;border:1px solid #b4b4b4;border-radius:3px;"></div><div style="position:absolute;left:886.5px;top:921.40px;line-height:20px;height:20px;white-space:pre;font-size:15px;color:#000;transform:translateX(-50%);">0%</div><div class="btn" style="left:1355px;top:918px;width:80px;height:27px;background:#efefef;border-color:#c6c6c6"></div><div style="position:absolute;left:1367px;top:921.60px;line-height:20px;height:20px;white-space:pre;font-size:15px;color:#b4b4b4;letter-spacing:-0.058px;">Abbruch</div><div class="btn" style="left:425px;top:951px;width:80px;height:27px;"></div><div style="position:absolute;left:457px;top:954.80px;line-height:20px;height:20px;white-space:pre;font-size:15px;color:#000;letter-spacing:0.183px;">Help</div><div class="btn" style="left:511px;top:951px;width:208px;height:27px;"></div><div style="position:absolute;left:525px;top:954.80px;line-height:20px;height:20px;white-space:pre;font-size:15px;color:#000;letter-spacing:-0.078px;">Als Batchprozess starten…</div><div class="btn" style="left:1269px;top:951px;width:80px;height:27px;"></div><div style="position:absolute;left:1298px;top:954.80px;line-height:20px;height:20px;white-space:pre;font-size:15px;color:#000;"><span style="text-decoration:underline;text-underline-offset:2px">C</span>lose</div><div class="btn" style="left:1355px;top:951px;width:80px;height:27px;border-color:#3d7fc0;box-shadow:inset 0 0 0 1px #a9cbea;background:linear-gradient(#f4f9fd,#e6eff7)"></div><div style="position:absolute;left:1382px;top:954.80px;line-height:20px;height:20px;white-space:pre;font-size:15px;color:#000;letter-spacing:-0.006px;">Starte</div><svg style="position:absolute;left:1059.6px;top:265.5px;" width="23" height="20" viewBox="0 0 23 20"><g fill="#8fc08f" stroke="#5e9f5e" stroke-width="1" stroke-linejoin="round"><path d="M8.6 2.8H3.8Q1 2.8 1 5.6V14.4Q1 17.2 3.8 17.2H9.2V19.4L13.8 15.4L9.2 11.4V13.6H4.8V6.4H8.6Z"/><path d="M14.4 17.2H19.2Q22 17.2 22 14.4V5.6Q22 2.8 19.2 2.8H13.8V0.6L9.2 4.6L13.8 8.6V6.4H18.2V13.6H14.4Z"/></g></svg><svg style="position:absolute;left:1094.5px;top:264.5px;" width="25" height="23" viewBox="0 0 25 23"><circle cx="6.2" cy="5.8" r="5" fill="#f2f2f2" stroke="#7a7a7a" stroke-width="0.9"/><path d="M6.6 6.2L-1 4L3 -2Z" fill="#efefef"/><path d="M2 3.4L5.4 5L5 8M5.6 1L6.8 4.4L9.6 4" fill="none" stroke="#7a7a7a" stroke-width="0.8"/><path d="M9.6 9.2L13 12.6" stroke="#222" stroke-width="3.8"/><path d="M12.6 12L22 21" stroke="#8a7320" stroke-width="4.6" stroke-linecap="round"/><path d="M12.8 12.2L21.8 20.8" stroke="#ecd574" stroke-width="3" stroke-linecap="round"/><circle cx="21.4" cy="20.4" r="1" fill="#bfa94a" stroke="#7a6820" stroke-width="0.4"/></svg><svg style="position:absolute;left:1059.6px;top:354.5px;" width="23" height="20" viewBox="0 0 23 20"><g fill="#8fc08f" stroke="#5e9f5e" stroke-width="1" stroke-linejoin="round"><path d="M8.6 2.8H3.8Q1 2.8 1 5.6V14.4Q1 17.2 3.8 17.2H9.2V19.4L13.8 15.4L9.2 11.4V13.6H4.8V6.4H8.6Z"/><path d="M14.4 17.2H19.2Q22 17.2 22 14.4V5.6Q22 2.8 19.2 2.8H13.8V0.6L9.2 4.6L13.8 8.6V6.4H18.2V13.6H14.4Z"/></g></svg><svg style="position:absolute;left:1094.5px;top:353.5px;" width="25" height="23" viewBox="0 0 25 23"><circle cx="6.2" cy="5.8" r="5" fill="#f2f2f2" stroke="#7a7a7a" stroke-width="0.9"/><path d="M6.6 6.2L-1 4L3 -2Z" fill="#efefef"/><path d="M2 3.4L5.4 5L5 8M5.6 1L6.8 4.4L9.6 4" fill="none" stroke="#7a7a7a" stroke-width="0.8"/><path d="M9.6 9.2L13 12.6" stroke="#222" stroke-width="3.8"/><path d="M12.6 12L22 21" stroke="#8a7320" stroke-width="4.6" stroke-linecap="round"/><path d="M12.8 12.2L21.8 20.8" stroke="#ecd574" stroke-width="3" stroke-linecap="round"/><circle cx="21.4" cy="20.4" r="1" fill="#bfa94a" stroke="#7a6820" stroke-width="0.4"/></svg><svg style="position:absolute;left:437px;top:266px;" width="16" height="16" viewBox="0 0 16 16"><g fill="#fff" stroke="#444" stroke-width="0.8"><path d="M12.5 3L14 4.5L12.5 6L11 4.5Z"/><path d="M5.4 6.1L6.9 7.6L5.4 9.1L3.9 7.6Z"/><path d="M3.6 12.9L5.1 14.4L3.6 15.9L2.1 14.4Z"/></g></svg><svg style="position:absolute;left:436.5px;top:357.5px;" width="17" height="13" viewBox="0 0 17 13"><path d="M1 3.4C1 0.6 4 0.6 8 2.2C12 0.4 16 0.4 16 3.4C16.4 6.6 16 8.8 14 8.8C11 8.8 9.6 7.2 7.4 8.4C5 9.8 4 12 2.4 12C0.6 12 1 7 1 3.4Z" fill="#e0e0e0" stroke="#7e7e7e" stroke-width="0.9"/><path d="M2 3.6C2 1.6 4.4 1.8 8 3.2C11.6 1.6 15 1.6 15 3.6" fill="none" stroke="#f6f6f6" stroke-width="0.9"/></svg><svg style="position:absolute;left:440px;top:956px;" width="14" height="16" viewBox="0 0 14 16"><rect x="0.5" y="0.5" width="13" height="15" rx="1.2" fill="#f4f4f4" stroke="#8a8a8a" stroke-width="0.9"/><circle cx="7" cy="8.6" r="4.2" fill="#fff" stroke="#d23232" stroke-width="1.9"/><path d="M7 4V13.2M2.4 8.6H11.6" stroke="#fff" stroke-width="1"/></svg><svg style="position:absolute;left:1282.5px;top:958.6px;" width="11" height="11" viewBox="0 0 11 11"><path d="M1.6 1.6L9.4 9.4M9.4 1.6L1.6 9.4" stroke="#8e8e8e" stroke-width="2.6" stroke-linecap="round"/></svg><svg style="position:absolute;left:1364.5px;top:955.5px;" width="16" height="16" viewBox="0 0 16 16"><path d="M8.6 0.6H15.4V6.6L9.4 12.6H7.4V15.6L0.6 10.2L7.4 4.8V7.8H8.6Z" fill="#6f8a56" stroke="#4f6a3a" stroke-width="0.9" stroke-linejoin="round"/><path d="M9.4 1.4H14.6V3" fill="none" stroke="#a9bd93" stroke-width="0.9"/></svg>
</body></html>
